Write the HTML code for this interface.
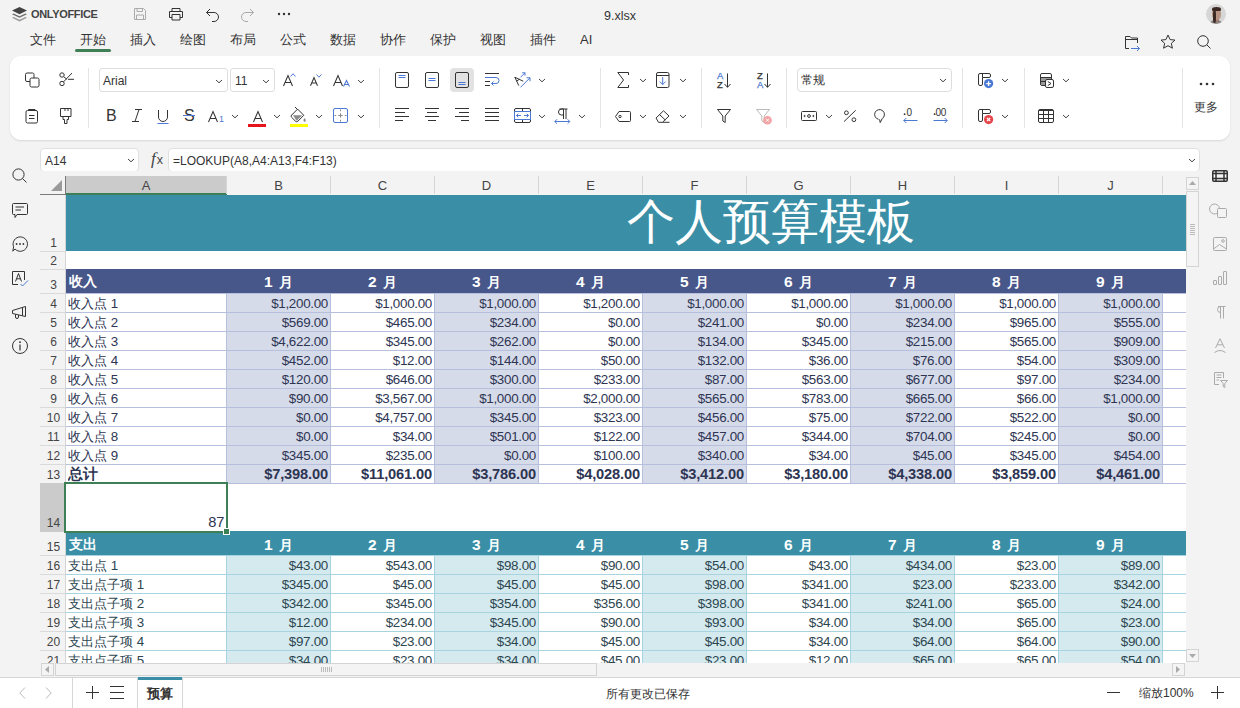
<!DOCTYPE html><html><head><meta charset="utf-8"><style>
html,body{margin:0;padding:0}
body{width:1240px;height:708px;overflow:hidden;position:relative;background:#f3f3f3;font-family:"Liberation Sans",sans-serif;color:#333}
svg{overflow:visible}
.rn{position:absolute;left:40px;width:25px;text-align:center;font-size:11px;color:#444}
.ch{position:absolute;top:172px;height:22px;line-height:22px;text-align:center;font-size:12px;color:#444}
.c{position:absolute;white-space:nowrap;overflow:hidden}
</style></head><body>
<svg style="position:absolute;left:11px;top:6px;" width="17" height="15" viewBox="0 0 17 15" fill="none" stroke="#444444" stroke-width="1"><path d="M8.5 1 L16 4.6 L8.5 8.2 L1 4.6 Z" fill="#444" stroke="none"/><path d="M2.6 7.4 L8.5 10.2 L14.4 7.4 L16 8.2 L8.5 11.8 L1 8.2 Z" fill="#6b6b6b" stroke="none"/><path d="M2.6 11 L8.5 13.8 L14.4 11 L16 11.8 L8.5 15.4 L1 11.8 Z" fill="#9a9a9a" stroke="none"/></svg>
<div style="position:absolute;left:31px;top:6px;white-space:nowrap;font-size:11px;font-weight:bold;color:#444;letter-spacing:-0.33px;line-height:16px">ONLYOFFICE</div>
<svg style="position:absolute;left:133px;top:7px;" width="14" height="14" viewBox="0 0 14 14" fill="none" stroke="#444444" stroke-width="1"><path d="M1.5 1.5 H10.5 L12.5 3.5 V12.5 H1.5 Z" stroke="#aaa"/><path d="M4 1.5 V4.5 H9.5 V1.5" stroke="#aaa"/><path d="M3.5 12.5 V8 H10.5 V12.5" stroke="#aaa"/></svg>
<svg style="position:absolute;left:168px;top:7px;" width="16" height="14" viewBox="0 0 16 14" fill="none" stroke="#444444" stroke-width="1"><path d="M4 4.5 V1.5 H12 V4.5" stroke="#333"/><path d="M4 10.5 H1.5 V4.5 H14.5 V10.5 H12" stroke="#333"/><path d="M4 7.5 H12 V13 H4 Z" stroke="#333"/></svg>
<svg style="position:absolute;left:205px;top:7px;" width="15" height="15" viewBox="0 0 15 15" fill="none" stroke="#444444" stroke-width="1"><path d="M1.5 5.5 H9 A4.5 4.5 0 0 1 9 14.5 H7" stroke="#333"/><path d="M5 2 L1.5 5.5 L5 9" stroke="#333"/></svg>
<svg style="position:absolute;left:240px;top:7px;" width="15" height="15" viewBox="0 0 15 15" fill="none" stroke="#444444" stroke-width="1"><path d="M13.5 5.5 H6 A4.5 4.5 0 0 0 6 14.5 H8" stroke="#aaa"/><path d="M10 2 L13.5 5.5 L10 9" stroke="#aaa"/></svg>
<svg style="position:absolute;left:277px;top:12px;" width="14" height="4" viewBox="0 0 14 4" fill="none" stroke="#444444" stroke-width="1"><circle cx="2" cy="2" r="1.2" fill="#333" stroke="none"/><circle cx="7" cy="2" r="1.2" fill="#333" stroke="none"/><circle cx="12" cy="2" r="1.2" fill="#333" stroke="none"/></svg>
<div style="position:absolute;left:0px;top:8px;white-space:nowrap;width:1240px;text-align:center;font-size:12.5px;color:#333;line-height:16px">9.xlsx</div>
<div style="position:absolute;left:1206px;top:4px;width:20px;height:20px;border-radius:50%;background:#d6d6d6;overflow:hidden"><div style="position:absolute;left:4px;top:16px;width:12px;height:7px;border-radius:45% 45% 0 0;background:#8a8583"></div><div style="position:absolute;left:7px;top:12px;width:6px;height:6px;background:#9a7a6a"></div><div style="position:absolute;left:6px;top:4px;width:9px;height:12px;border-radius:45% 45% 45% 45%;background:#b89484"></div><div style="position:absolute;left:7px;top:6px;width:3px;height:13px;border-radius:40%;background:#3a2822"></div><div style="position:absolute;left:6px;top:3px;width:9px;height:4px;border-radius:50% 50% 20% 20%;background:#3a2822"></div></div>
<div style="position:absolute;left:30px;top:32px;white-space:nowrap;font-size:13px;color:#333;line-height:16px">文件</div>
<div style="position:absolute;left:80px;top:32px;white-space:nowrap;font-size:13px;color:#333;line-height:16px">开始</div>
<div style="position:absolute;left:130px;top:32px;white-space:nowrap;font-size:13px;color:#333;line-height:16px">插入</div>
<div style="position:absolute;left:180px;top:32px;white-space:nowrap;font-size:13px;color:#333;line-height:16px">绘图</div>
<div style="position:absolute;left:230px;top:32px;white-space:nowrap;font-size:13px;color:#333;line-height:16px">布局</div>
<div style="position:absolute;left:280px;top:32px;white-space:nowrap;font-size:13px;color:#333;line-height:16px">公式</div>
<div style="position:absolute;left:330px;top:32px;white-space:nowrap;font-size:13px;color:#333;line-height:16px">数据</div>
<div style="position:absolute;left:380px;top:32px;white-space:nowrap;font-size:13px;color:#333;line-height:16px">协作</div>
<div style="position:absolute;left:430px;top:32px;white-space:nowrap;font-size:13px;color:#333;line-height:16px">保护</div>
<div style="position:absolute;left:480px;top:32px;white-space:nowrap;font-size:13px;color:#333;line-height:16px">视图</div>
<div style="position:absolute;left:530px;top:32px;white-space:nowrap;font-size:13px;color:#333;line-height:16px">插件</div>
<div style="position:absolute;left:580px;top:32px;white-space:nowrap;font-size:13px;color:#333;line-height:16px">AI</div>
<div style="position:absolute;left:75px;top:49px;width:36px;height:3px;background:#3f7f55;border-radius:2px"></div>
<svg style="position:absolute;left:1125px;top:35px;" width="16" height="16" viewBox="0 0 16 16" fill="none" stroke="#444444" stroke-width="1"><path d="M0.5 13.5 V1.5 H5 L6.5 3 H12.5 V8" stroke="#333"/><path d="M0.5 4.5 H12.5" stroke="#333"/><path d="M0.5 13.5 H4" stroke="#333"/><path d="M6 13.5 H14.5 M12 11 L14.5 13.5 L12 16" stroke="#4a78d3"/></svg>
<svg style="position:absolute;left:1160px;top:34px;" width="16" height="15" viewBox="0 0 16 15" fill="none" stroke="#444444" stroke-width="1"><path d="M8 1 L10.1 5.6 L15 6.1 L11.3 9.4 L12.4 14.2 L8 11.7 L3.6 14.2 L4.7 9.4 L1 6.1 L5.9 5.6 Z" stroke="#333" stroke-linejoin="round"/></svg>
<svg style="position:absolute;left:1197px;top:35px;" width="14" height="14" viewBox="0 0 14 14" fill="none" stroke="#444444" stroke-width="1"><circle cx="6" cy="6" r="5.3" stroke="#333"/><path d="M9.8 9.8 L13.5 13.5" stroke="#333"/></svg>
<div style="position:absolute;left:10px;top:56px;width:1220px;height:84px;background:#fff;border-radius:11px;box-shadow:0 1px 2px rgba(0,0,0,0.12)"></div>
<div style="position:absolute;left:88px;top:68px;width:1px;height:60px;background:#e4e4e4"></div>
<div style="position:absolute;left:379px;top:68px;width:1px;height:60px;background:#e4e4e4"></div>
<div style="position:absolute;left:600px;top:68px;width:1px;height:60px;background:#e4e4e4"></div>
<div style="position:absolute;left:701px;top:68px;width:1px;height:60px;background:#e4e4e4"></div>
<div style="position:absolute;left:786px;top:68px;width:1px;height:60px;background:#e4e4e4"></div>
<div style="position:absolute;left:962px;top:68px;width:1px;height:60px;background:#e4e4e4"></div>
<div style="position:absolute;left:1024px;top:68px;width:1px;height:60px;background:#e4e4e4"></div>
<div style="position:absolute;left:1182px;top:68px;width:1px;height:60px;background:#e4e4e4"></div>
<svg style="position:absolute;left:25px;top:72px;" width="15" height="16" viewBox="0 0 15 16" fill="none" stroke="#444444" stroke-width="1"><rect x="0.5" y="1" width="8.5" height="8.5" rx="1.5" stroke="#333"/><rect x="5" y="6" width="9" height="9" rx="1.5" fill="#fff" stroke="#333"/></svg>
<svg style="position:absolute;left:59px;top:72px;" width="16" height="15" viewBox="0 0 16 15" fill="none" stroke="#444444" stroke-width="1"><circle cx="3" cy="3" r="2.2" stroke="#333"/><circle cx="3" cy="11.5" r="2.2" stroke="#333"/><path d="M4.6 9.8 L13 1 M5 5 L8 7.3 M9 7.3 H15" stroke="#333"/></svg>
<svg style="position:absolute;left:25px;top:108px;" width="14" height="16" viewBox="0 0 14 16" fill="none" stroke="#444444" stroke-width="1"><rect x="1" y="2.5" width="11.5" height="12.5" rx="1.5" stroke="#333"/><path d="M3.5 2.5 V1.5 H10 V2.5" stroke="#333"/><path d="M4 7.5 H9.5 M4 10.5 H9.5" stroke="#333"/></svg>
<svg style="position:absolute;left:60px;top:108px;" width="12" height="16" viewBox="0 0 12 16" fill="none" stroke="#444444" stroke-width="1"><path d="M0.5 0.5 H11 V8.5 H0.5 Z" stroke="#333"/><path d="M3 8.5 V11.5 H4.5 V15.5 H7 V11.5 H8.5 V8.5" stroke="#333"/><path d="M5 0.5 V3 M8 0.5 V3" stroke="#333"/></svg>
<div style="position:absolute;left:99px;top:68px;width:129px;height:24px;border:1px solid #dedede;border-radius:3px;background:#fff;box-sizing:border-box"></div>
<div style="position:absolute;left:103px;top:74px;white-space:nowrap;font-size:12px;color:#333;line-height:14px">Arial</div>
<svg style="position:absolute;left:215px;top:78px;" width="8" height="6" viewBox="0 0 8 6" fill="none" stroke="#444444" stroke-width="1"><path d="M1 2 L4 4.8 L7 2" stroke="#444444"/></svg>
<div style="position:absolute;left:230px;top:68px;width:45px;height:24px;border:1px solid #dedede;border-radius:3px;background:#fff;box-sizing:border-box"></div>
<div style="position:absolute;left:235px;top:74px;white-space:nowrap;font-size:12px;color:#333;line-height:14px">11</div>
<svg style="position:absolute;left:262px;top:78px;" width="8" height="6" viewBox="0 0 8 6" fill="none" stroke="#444444" stroke-width="1"><path d="M1 2 L4 4.8 L7 2" stroke="#444444"/></svg>
<svg style="position:absolute;left:283px;top:75px;" width="10" height="12" viewBox="0 0 10 12" fill="none" stroke="#444444" stroke-width="1"><path d="M0.5 11 L5.0 0.5 L9.5 11 M2.3 7.48 H7.7" stroke="#333" stroke-width="1.05"/></svg>
<svg style="position:absolute;left:290px;top:73px;" width="6" height="4" viewBox="0 0 6 4" fill="none" stroke="#444444" stroke-width="1"><path d="M0.5 3.5 L3 0.8 L5.5 3.5" stroke="#4a78d3"/></svg>
<svg style="position:absolute;left:310px;top:76.5px;" width="8" height="9.7" viewBox="0 0 8 9.7" fill="none" stroke="#444444" stroke-width="1"><path d="M0.5 8.7 L4.0 0.5 L7.5 8.7 M1.9000000000000001 5.916 H6.1000000000000005" stroke="#333" stroke-width="1.05"/></svg>
<svg style="position:absolute;left:316px;top:74px;" width="6" height="4" viewBox="0 0 6 4" fill="none" stroke="#444444" stroke-width="1"><path d="M0.5 0.5 L3 3.2 L5.5 0.5" stroke="#4a78d3"/></svg>
<svg style="position:absolute;left:333px;top:75px;" width="10" height="12" viewBox="0 0 10 12" fill="none" stroke="#444444" stroke-width="1"><path d="M0.5 11 L5.0 0.5 L9.5 11 M2.3 7.48 H7.7" stroke="#333" stroke-width="1.05"/></svg>
<svg style="position:absolute;left:343px;top:79.5px;" width="7" height="7.5" viewBox="0 0 7 7.5" fill="none" stroke="#444444" stroke-width="1"><path d="M0.5 6.5 L3.5 0.5 L6.5 6.5 M1.7000000000000002 4.42 H5.300000000000001" stroke="#4a78d3" stroke-width="1.05"/></svg>
<svg style="position:absolute;left:357px;top:78px;" width="8" height="6" viewBox="0 0 8 6" fill="none" stroke="#444444" stroke-width="1"><path d="M1 2 L4 4.8 L7 2" stroke="#444444"/></svg>
<div style="position:absolute;left:106px;top:107px;white-space:nowrap;font-size:16px;color:#333;line-height:18px">B</div>
<svg style="position:absolute;left:131px;top:109px;" width="12" height="13" viewBox="0 0 12 13" fill="none" stroke="#444444" stroke-width="1"><path d="M4 0.5 H11 M1 12.5 H8 M8 0.5 L4 12.5" stroke="#333"/></svg>
<svg style="position:absolute;left:157px;top:109px;" width="12" height="16" viewBox="0 0 12 16" fill="none" stroke="#444444" stroke-width="1"><path d="M1.5 1 V8 A4.5 4.5 0 0 0 10.5 8 V1" stroke="#333"/><path d="M0.5 14.5 H11.5" stroke="#4a78d3"/></svg>
<div style="position:absolute;left:184px;top:107px;white-space:nowrap;font-size:16px;color:#333;line-height:18px">S</div>
<div style="position:absolute;left:183px;top:115px;width:12px;height:1px;background:#4a78d3"></div>
<svg style="position:absolute;left:207.5px;top:110.5px;" width="10" height="12" viewBox="0 0 10 12" fill="none" stroke="#444444" stroke-width="1"><path d="M0.5 11 L5.0 0.5 L9.5 11 M2.3 7.48 H7.7" stroke="#333" stroke-width="1.05"/></svg>
<div style="position:absolute;left:219px;top:114px;white-space:nowrap;font-size:9px;color:#4a78d3;line-height:10px">1</div>
<svg style="position:absolute;left:231px;top:113px;" width="8" height="6" viewBox="0 0 8 6" fill="none" stroke="#444444" stroke-width="1"><path d="M1 2 L4 4.8 L7 2" stroke="#444444"/></svg>
<svg style="position:absolute;left:252.5px;top:110.5px;" width="10" height="12" viewBox="0 0 10 12" fill="none" stroke="#444444" stroke-width="1"><path d="M0.5 11 L5.0 0.5 L9.5 11 M2.3 7.48 H7.7" stroke="#333" stroke-width="1.05"/></svg>
<div style="position:absolute;left:248px;top:124px;width:18px;height:3px;background:#e8141c"></div>
<svg style="position:absolute;left:273px;top:113px;" width="8" height="6" viewBox="0 0 8 6" fill="none" stroke="#444444" stroke-width="1"><path d="M1 2 L4 4.8 L7 2" stroke="#444444"/></svg>
<svg style="position:absolute;left:290px;top:107px;" width="17" height="16" viewBox="0 0 17 16" fill="none" stroke="#444444" stroke-width="1"><path d="M7.6 2.1 L13.8 8.3 L7.9 14.2 Q6.7 15.3 5.5 14.2 L1.6 10.3 Q0.6 9.2 1.6 8.1 Z" stroke="#333" stroke-linejoin="round"/><path d="M5 0 L7.6 2.6" stroke="#333"/><path d="M3 8.3 H12.3 L7.2 13.2 Q6.7 13.6 6.2 13.2 Z" fill="#8a8a8a" stroke="none"/><path d="M14.6 11 Q16.4 13 15.6 14.2 A1.4 1.4 0 0 1 13.6 14.2 Q12.8 13 14.6 11 Z" fill="#8a8a8a" stroke="none"/></svg>
<div style="position:absolute;left:290px;top:124px;width:18px;height:3px;background:#ffff00"></div>
<svg style="position:absolute;left:315px;top:113px;" width="8" height="6" viewBox="0 0 8 6" fill="none" stroke="#444444" stroke-width="1"><path d="M1 2 L4 4.8 L7 2" stroke="#444444"/></svg>
<svg style="position:absolute;left:333px;top:108px;" width="15" height="15" viewBox="0 0 15 15" fill="none" stroke="#444444" stroke-width="1"><rect x="0.5" y="0.5" width="14" height="14" rx="1.5" stroke="#4a78d3"/><path d="M7.5 5.3 V9.7 M5.3 7.5 H9.7 M7.5 1.5 V3.2 M7.5 11.8 V13.5 M1.5 7.5 H3.2 M11.8 7.5 H13.5" stroke="#888"/></svg>
<svg style="position:absolute;left:357px;top:113px;" width="8" height="6" viewBox="0 0 8 6" fill="none" stroke="#444444" stroke-width="1"><path d="M1 2 L4 4.8 L7 2" stroke="#444444"/></svg>
<svg style="position:absolute;left:395px;top:72px;" width="14" height="16" viewBox="0 0 14 16" fill="none" stroke="#444444" stroke-width="1"><rect x="0.5" y="0.5" width="13" height="15" rx="1.5" stroke="#333"/><path d="M3.5 3.5 H10.5" stroke="#4a78d3"/><path d="M3.5 5.5 H10.5" stroke="#4a78d3"/></svg>
<svg style="position:absolute;left:425px;top:72px;" width="14" height="16" viewBox="0 0 14 16" fill="none" stroke="#444444" stroke-width="1"><rect x="0.5" y="0.5" width="13" height="15" rx="1.5" stroke="#333"/><path d="M3.5 6.5 H10.5" stroke="#4a78d3"/><path d="M3.5 8.5 H10.5" stroke="#4a78d3"/></svg>
<div style="position:absolute;left:450px;top:68px;width:24px;height:24px;background:#e2e2e2;border-radius:4px"></div>
<svg style="position:absolute;left:455px;top:72px;" width="14" height="16" viewBox="0 0 14 16" fill="none" stroke="#444444" stroke-width="1"><rect x="0.5" y="0.5" width="13" height="15" rx="1.5" stroke="#333"/><path d="M3.5 10.5 H10.5" stroke="#4a78d3"/><path d="M3.5 12.5 H10.5" stroke="#4a78d3"/></svg>
<svg style="position:absolute;left:485px;top:73px;" width="15" height="14" viewBox="0 0 15 14" fill="none" stroke="#444444" stroke-width="1"><path d="M0 0.5 H14 M0 8.5 H5 M0 12.5 H5" stroke="#333"/><path d="M0 4.5 H11 A3 3 0 0 1 11 10.5 H6.5 M8.5 8.5 L6.5 10.5 L8.5 12.5" stroke="#4a78d3"/></svg>
<svg style="position:absolute;left:514px;top:72px;" width="17" height="16" viewBox="0 0 17 16" fill="none" stroke="#444444" stroke-width="1"><path d="M0.8 5.2 L4.8 13.6 M0.8 5.2 L9.2 9.2 M2.6 9 L5.6 7.2" stroke="#333"/><path d="M6.5 5.3 L11 0.8 M8.2 0.8 H11 V3.6 M6.5 15.3 L16 5.8 M12.5 5.8 H16 V9.3" stroke="#4a78d3"/></svg>
<svg style="position:absolute;left:538px;top:77px;" width="8" height="6" viewBox="0 0 8 6" fill="none" stroke="#444444" stroke-width="1"><path d="M1 2 L4 4.8 L7 2" stroke="#444444"/></svg>
<svg style="position:absolute;left:395px;top:108px;" width="14" height="14" viewBox="0 0 14 14" fill="none" stroke="#444444" stroke-width="1"><path d="M0 0.5 H14" stroke="#333"/><path d="M0 4.5 H10" stroke="#333"/><path d="M0 8.5 H14" stroke="#333"/><path d="M0 12.5 H8" stroke="#333"/></svg>
<svg style="position:absolute;left:425px;top:108px;" width="14" height="14" viewBox="0 0 14 14" fill="none" stroke="#444444" stroke-width="1"><path d="M0 0.5 H14" stroke="#333"/><path d="M2 4.5 H12" stroke="#333"/><path d="M0 8.5 H14" stroke="#333"/><path d="M3 12.5 H11" stroke="#333"/></svg>
<svg style="position:absolute;left:455px;top:108px;" width="14" height="14" viewBox="0 0 14 14" fill="none" stroke="#444444" stroke-width="1"><path d="M0 0.5 H14" stroke="#333"/><path d="M4 4.5 H14" stroke="#333"/><path d="M0 8.5 H14" stroke="#333"/><path d="M6 12.5 H14" stroke="#333"/></svg>
<svg style="position:absolute;left:485px;top:108px;" width="14" height="14" viewBox="0 0 14 14" fill="none" stroke="#444444" stroke-width="1"><path d="M0 0.5 H14" stroke="#333"/><path d="M0 4.5 H14" stroke="#333"/><path d="M0 8.5 H14" stroke="#333"/><path d="M0 12.5 H14" stroke="#333"/></svg>
<svg style="position:absolute;left:514px;top:108px;" width="17" height="15" viewBox="0 0 17 15" fill="none" stroke="#444444" stroke-width="1"><rect x="0.5" y="0.5" width="16" height="14" rx="1.5" stroke="#333"/><path d="M8.5 0.5 V3.5 M8.5 11.5 V14.5" stroke="#333"/><rect x="0.5" y="3.5" width="16" height="8" stroke="#4a78d3"/><path d="M2.5 7.5 H7 M4.3 5.7 L2.5 7.5 L4.3 9.3 M10 7.5 H14.5 M12.7 5.7 L14.5 7.5 L12.7 9.3" stroke="#4a78d3"/></svg>
<svg style="position:absolute;left:538px;top:113px;" width="8" height="6" viewBox="0 0 8 6" fill="none" stroke="#444444" stroke-width="1"><path d="M1 2 L4 4.8 L7 2" stroke="#444444"/></svg>
<svg style="position:absolute;left:554px;top:108px;" width="17" height="16" viewBox="0 0 17 16" fill="none" stroke="#444444" stroke-width="1"><path d="M5.5 1 H13.5 M9.5 1 V11 M12 1 V11 M9.5 1 H7.5 A3 3 0 0 0 7.5 7 H9.5" stroke="#333"/><path d="M0.8 13.5 H15.8 M3 11.3 L0.8 13.5 L3 15.7 M13.6 11.3 L15.8 13.5 L13.6 15.7" stroke="#4a78d3"/></svg>
<svg style="position:absolute;left:578px;top:113px;" width="8" height="6" viewBox="0 0 8 6" fill="none" stroke="#444444" stroke-width="1"><path d="M1 2 L4 4.8 L7 2" stroke="#444444"/></svg>
<svg style="position:absolute;left:617px;top:72px;" width="12" height="16" viewBox="0 0 12 16" fill="none" stroke="#444444" stroke-width="1"><path d="M11.5 3 V0.5 H0.8 L6.5 8 L0.8 15.5 H11.5 V13" stroke="#333" stroke-linejoin="round"/></svg>
<svg style="position:absolute;left:639px;top:77px;" width="8" height="6" viewBox="0 0 8 6" fill="none" stroke="#444444" stroke-width="1"><path d="M1 2 L4 4.8 L7 2" stroke="#444444"/></svg>
<svg style="position:absolute;left:656px;top:72px;" width="13" height="16" viewBox="0 0 13 16" fill="none" stroke="#444444" stroke-width="1"><rect x="0.5" y="0.5" width="12.5" height="15" rx="1.5" stroke="#333"/><path d="M0.5 3.5 H13" stroke="#333"/><path d="M6.7 5 V12.5 M3.8 9.6 L6.7 12.5 L9.6 9.6" stroke="#4a78d3"/></svg>
<svg style="position:absolute;left:679px;top:77px;" width="8" height="6" viewBox="0 0 8 6" fill="none" stroke="#444444" stroke-width="1"><path d="M1 2 L4 4.8 L7 2" stroke="#444444"/></svg>
<svg style="position:absolute;left:615px;top:111px;" width="16" height="11" viewBox="0 0 16 11" fill="none" stroke="#444444" stroke-width="1"><path d="M4 0.5 H14.5 A1 1 0 0 1 15.5 1.5 V9.5 A1 1 0 0 1 14.5 10.5 H4 L0.5 5.5 Z" stroke="#333" stroke-linejoin="round"/><circle cx="5" cy="5.5" r="1.2" stroke="#333"/></svg>
<svg style="position:absolute;left:639px;top:113px;" width="8" height="6" viewBox="0 0 8 6" fill="none" stroke="#444444" stroke-width="1"><path d="M1 2 L4 4.8 L7 2" stroke="#444444"/></svg>
<svg style="position:absolute;left:655px;top:110px;" width="16" height="13" viewBox="0 0 16 13" fill="none" stroke="#444444" stroke-width="1"><path d="M1 8 L8.5 0.8 L14 6 L7.5 12.3 H3.5 Z M4.5 4.5 L10.3 10" stroke="#333" stroke-linejoin="round"/><path d="M7.5 12.3 H14.5" stroke="#333"/></svg>
<svg style="position:absolute;left:679px;top:113px;" width="8" height="6" viewBox="0 0 8 6" fill="none" stroke="#444444" stroke-width="1"><path d="M1 2 L4 4.8 L7 2" stroke="#444444"/></svg>
<div style="position:absolute;left:717px;top:71px;white-space:nowrap;font-size:9.5px;line-height:9px;color:#4a78d3;-webkit-text-stroke:0.25px #4a78d3">A</div>
<div style="position:absolute;left:717px;top:79.5px;white-space:nowrap;font-size:9.5px;line-height:9px;color:#333;-webkit-text-stroke:0.25px #333">Z</div>
<svg style="position:absolute;left:724px;top:73px;" width="7" height="15" viewBox="0 0 7 15" fill="none" stroke="#444444" stroke-width="1"><path d="M3.5 0.5 V14.3 M0.5 11 L3.5 14.3 L6.5 11" stroke="#333"/></svg>
<div style="position:absolute;left:757px;top:71px;white-space:nowrap;font-size:9.5px;line-height:9px;color:#333;-webkit-text-stroke:0.25px #333">Z</div>
<div style="position:absolute;left:757px;top:79.5px;white-space:nowrap;font-size:9.5px;line-height:9px;color:#4a78d3;-webkit-text-stroke:0.25px #4a78d3">A</div>
<svg style="position:absolute;left:764px;top:73px;" width="7" height="15" viewBox="0 0 7 15" fill="none" stroke="#444444" stroke-width="1"><path d="M3.5 0.5 V14.3 M0.5 11 L3.5 14.3 L6.5 11" stroke="#333"/></svg>
<svg style="position:absolute;left:717px;top:109px;" width="14" height="14" viewBox="0 0 14 14" fill="none" stroke="#444444" stroke-width="1"><path d="M0.5 0.5 H13.5 L8.2 7 V13.5 L5.8 12 V7 Z" stroke="#333" stroke-linejoin="round"/></svg>
<svg style="position:absolute;left:756px;top:109px;" width="17" height="16" viewBox="0 0 17 16" fill="none" stroke="#444444" stroke-width="1"><path d="M0.5 0.5 H13.5 L8.2 7 V13.5 L5.8 12 V7 Z" stroke="#bbb" stroke-linejoin="round"/><circle cx="11.5" cy="11.2" r="4.3" fill="#f3a3a3" stroke="none"/><path d="M10 9.7 L13 12.7 M13 9.7 L10 12.7" stroke="#fff"/></svg>
<div style="position:absolute;left:797px;top:68px;width:155px;height:24px;border:1px solid #dedede;border-radius:4px;background:#fff;box-sizing:border-box"></div>
<div style="position:absolute;left:801px;top:73px;white-space:nowrap;font-size:12px;color:#333;line-height:14px">常规</div>
<svg style="position:absolute;left:939px;top:77px;" width="8" height="6" viewBox="0 0 8 6" fill="none" stroke="#444444" stroke-width="1"><path d="M1 2 L4 4.8 L7 2" stroke="#444444"/></svg>
<svg style="position:absolute;left:801px;top:111px;" width="16" height="10" viewBox="0 0 16 10" fill="none" stroke="#444444" stroke-width="1"><rect x="0.5" y="0.5" width="15" height="9" rx="1" stroke="#333"/><circle cx="8" cy="5" r="1.4" stroke="#333"/><circle cx="3.6" cy="5" r="0.6" fill="#333"/><circle cx="12.4" cy="5" r="0.6" fill="#333"/></svg>
<svg style="position:absolute;left:825px;top:113px;" width="8" height="6" viewBox="0 0 8 6" fill="none" stroke="#444444" stroke-width="1"><path d="M1 2 L4 4.8 L7 2" stroke="#444444"/></svg>
<svg style="position:absolute;left:844px;top:110px;" width="13" height="13" viewBox="0 0 13 13" fill="none" stroke="#444444" stroke-width="1"><circle cx="2.4" cy="2.8" r="1.9" stroke="#333"/><circle cx="9.9" cy="9.7" r="1.9" stroke="#333"/><path d="M11.7 0.3 L0 11.6" stroke="#333"/></svg>
<svg style="position:absolute;left:874px;top:109px;" width="12" height="15" viewBox="0 0 12 15" fill="none" stroke="#444444" stroke-width="1"><path d="M4.6 10.3 A4.9 4.9 0 1 1 8.2 9.6 L6.2 13.6 L5.6 10.4" stroke="#333" stroke-linejoin="round"/></svg>
<div style="position:absolute;left:906.5px;top:107.5px;white-space:nowrap;font-size:10px;color:#333;line-height:10px">0</div>
<svg style="position:absolute;left:903px;top:108px;" width="15" height="16" viewBox="0 0 15 16" fill="none" stroke="#444444" stroke-width="1"><circle cx="1.6" cy="6.2" r="0.9" fill="#333" stroke="none"/><path d="M0.8 12.5 H14.5 M3.3 10 L0.8 12.5 L3.3 15" stroke="#4a78d3"/></svg>
<div style="position:absolute;left:935.5px;top:107.5px;white-space:nowrap;font-size:10px;color:#333;line-height:10px;letter-spacing:-0.4px">00</div>
<svg style="position:absolute;left:933px;top:108px;" width="15" height="16" viewBox="0 0 15 16" fill="none" stroke="#444444" stroke-width="1"><circle cx="1.6" cy="6.2" r="0.9" fill="#333" stroke="none"/><path d="M0.5 12.5 H14.2 M11.7 10 L14.2 12.5 L11.7 15" stroke="#4a78d3"/></svg>
<svg style="position:absolute;left:977px;top:72px;" width="17" height="17" viewBox="0 0 17 17" fill="none" stroke="#444444" stroke-width="1"><path d="M3 1.5 H12 A1.5 1.5 0 0 1 13.5 3 V4 A1.5 1.5 0 0 1 12 5.5 H5.5 V12 A1.5 1.5 0 0 1 4 13.5 H3 A1.5 1.5 0 0 1 1.5 12 V3 A1.5 1.5 0 0 1 3 1.5 Z M5.5 1.5 V5.5" stroke="#333"/><circle cx="11.6" cy="11.6" r="4.6" fill="#4a78d3" stroke="none"/><path d="M11.6 9.2 V14 M9.2 11.6 H14" stroke="#fff" stroke-width="1.3"/></svg>
<svg style="position:absolute;left:1001px;top:77px;" width="8" height="6" viewBox="0 0 8 6" fill="none" stroke="#444444" stroke-width="1"><path d="M1 2 L4 4.8 L7 2" stroke="#444444"/></svg>
<svg style="position:absolute;left:977px;top:108px;" width="17" height="17" viewBox="0 0 17 17" fill="none" stroke="#444444" stroke-width="1"><path d="M3 1.5 H12 A1.5 1.5 0 0 1 13.5 3 V4 A1.5 1.5 0 0 1 12 5.5 H5.5 V12 A1.5 1.5 0 0 1 4 13.5 H3 A1.5 1.5 0 0 1 1.5 12 V3 A1.5 1.5 0 0 1 3 1.5 Z M5.5 1.5 V5.5" stroke="#333"/><circle cx="11.6" cy="11.6" r="4.6" fill="#e5464b" stroke="none"/><path d="M10 10 L13.2 13.2 M13.2 10 L10 13.2" stroke="#fff" stroke-width="1.2"/></svg>
<svg style="position:absolute;left:1001px;top:113px;" width="8" height="6" viewBox="0 0 8 6" fill="none" stroke="#444444" stroke-width="1"><path d="M1 2 L4 4.8 L7 2" stroke="#444444"/></svg>
<svg style="position:absolute;left:1039px;top:72px;" width="16" height="17" viewBox="0 0 16 17" fill="none" stroke="#444444" stroke-width="1"><rect x="1.5" y="1.5" width="11" height="12" rx="1.5" stroke="#333"/><path d="M1.5 5.5 H12.5 V9.5 H1.5 Z" fill="#999" stroke="#333"/><path d="M2 10 H6 V13 H2 Z" fill="#999" stroke="none"/><rect x="6.5" y="7.5" width="8" height="8" rx="1.5" fill="#fff" stroke="#333"/><path d="M8.8 9.5 L12 11.5 L8.8 13.5" stroke="#333"/></svg>
<svg style="position:absolute;left:1062px;top:77px;" width="8" height="6" viewBox="0 0 8 6" fill="none" stroke="#444444" stroke-width="1"><path d="M1 2 L4 4.8 L7 2" stroke="#444444"/></svg>
<svg style="position:absolute;left:1038px;top:109px;" width="16" height="14" viewBox="0 0 16 14" fill="none" stroke="#444444" stroke-width="1"><rect x="0.5" y="0.5" width="15" height="13" rx="1.5" stroke="#333"/><path d="M1 1.5 H15" stroke="#333"/><path d="M0.5 5.5 H15.5 M0.5 9.5 H15.5 M5.5 0.5 V13.5 M10.5 0.5 V13.5" stroke="#333"/></svg>
<svg style="position:absolute;left:1062px;top:113px;" width="8" height="6" viewBox="0 0 8 6" fill="none" stroke="#444444" stroke-width="1"><path d="M1 2 L4 4.8 L7 2" stroke="#444444"/></svg>
<svg style="position:absolute;left:1199px;top:82px;" width="16" height="4" viewBox="0 0 16 4" fill="none" stroke="#444444" stroke-width="1"><circle cx="2" cy="2" r="1.3" fill="#333" stroke="none"/><circle cx="8" cy="2" r="1.3" fill="#333" stroke="none"/><circle cx="14" cy="2" r="1.3" fill="#333" stroke="none"/></svg>
<div style="position:absolute;left:1194px;top:99px;white-space:nowrap;font-size:12px;color:#333;line-height:16px">更多</div>
<svg style="position:absolute;left:12px;top:168px;" width="16" height="16" viewBox="0 0 16 16" fill="none" stroke="#444444" stroke-width="1"><circle cx="6.5" cy="6.5" r="5.6" stroke="#333"/><path d="M10.5 10.5 L14.5 14.5" stroke="#333"/></svg>
<svg style="position:absolute;left:12px;top:203px;" width="16" height="16" viewBox="0 0 16 16" fill="none" stroke="#444444" stroke-width="1"><path d="M1.5 0.5 H14.5 A1 1 0 0 1 15.5 1.5 V10.5 A1 1 0 0 1 14.5 11.5 H5 L3 14.5 V11.5 H1.5 A1 1 0 0 1 0.5 10.5 V1.5 A1 1 0 0 1 1.5 0.5 Z" stroke="#333" stroke-linejoin="round"/><path d="M3.5 4 H12 M3.5 7 H9" stroke="#333"/></svg>
<svg style="position:absolute;left:12px;top:236px;" width="16" height="16" viewBox="0 0 16 16" fill="none" stroke="#444444" stroke-width="1"><path d="M3 13 A7.2 7.2 0 1 0 1.6 10.8 L0.8 15.2 Z" stroke="#333" stroke-linejoin="round"/><circle cx="4.6" cy="8" r="0.9" fill="#333" stroke="none"/><circle cx="8" cy="8" r="0.9" fill="#333" stroke="none"/><circle cx="11.4" cy="8" r="0.9" fill="#333" stroke="none"/></svg>
<svg style="position:absolute;left:12px;top:271px;" width="17" height="16" viewBox="0 0 17 16" fill="none" stroke="#444444" stroke-width="1"><path d="M12.5 9 V0.5 H0.5 V13.5 H6" stroke="#333"/><path d="M3.5 10.5 L6.5 2.5 L9.5 10.5 M4.6 7.8 H8.4" stroke="#333"/><path d="M8.5 13 L10.5 15 L16 9.5" stroke="#4a78d3"/></svg>
<svg style="position:absolute;left:12px;top:306px;" width="15" height="13" viewBox="0 0 15 13" fill="none" stroke="#444444" stroke-width="1"><path d="M0.5 4.5 L13.5 0.5 V10.5 L0.5 7.5 Z M10.5 1.5 V9.7" stroke="#333" stroke-linejoin="round"/><path d="M3.5 8.3 V11 A1.5 1.5 0 0 0 6.5 11 V9" stroke="#333"/></svg>
<svg style="position:absolute;left:12px;top:338px;" width="16" height="16" viewBox="0 0 16 16" fill="none" stroke="#444444" stroke-width="1"><circle cx="8" cy="8" r="7.5" stroke="#333"/><path d="M8 6.5 V12.5" stroke="#333" stroke-width="1.2"/><circle cx="8" cy="4.2" r="0.9" fill="#333" stroke="none"/></svg>
<svg style="position:absolute;left:1212px;top:170px;" width="16" height="12" viewBox="0 0 16 12" fill="none" stroke="#444444" stroke-width="1"><rect x="0.75" y="0.75" width="14.5" height="10.5" rx="1.2" stroke="#333" stroke-width="1.5"/><path d="M0.75 3.5 H15.25 M0.75 8.5 H15.25 M4 0.75 V11.25 M12 0.75 V11.25" stroke="#333" stroke-width="1.5"/></svg>
<svg style="position:absolute;left:1212px;top:203px;" width="15" height="15" viewBox="0 0 15 15" fill="none" stroke="#444444" stroke-width="1"><path d="M7.5 5.5 A5 5 0 1 0 5.5 10" stroke="#aaa"/><rect x="5.5" y="5.5" width="9" height="9" rx="1" stroke="#aaa"/></svg>
<svg style="position:absolute;left:1213px;top:237px;" width="14" height="14" viewBox="0 0 14 14" fill="none" stroke="#444444" stroke-width="1"><rect x="0.5" y="0.5" width="13" height="13" rx="1" stroke="#aaa"/><path d="M0.5 12 L6.5 7.5 L13.5 12" stroke="#aaa"/><circle cx="10" cy="4" r="1.3" stroke="#aaa"/></svg>
<svg style="position:absolute;left:1213px;top:271px;" width="14" height="14" viewBox="0 0 14 14" fill="none" stroke="#444444" stroke-width="1"><rect x="0.5" y="9.5" width="3" height="4" rx="0.5" stroke="#aaa"/><rect x="5.5" y="5.5" width="3" height="8" rx="0.5" stroke="#aaa"/><rect x="10.5" y="0.5" width="3" height="13" rx="0.5" stroke="#aaa"/></svg>
<svg style="position:absolute;left:1214px;top:306px;" width="12" height="13" viewBox="0 0 12 13" fill="none" stroke="#444444" stroke-width="1"><path d="M4 0.5 H11.5 M6.5 0.5 V12.5 M9.5 0.5 V12.5 M6.5 0.5 A3 3 0 0 0 6.5 6.5" stroke="#aaa"/></svg>
<svg style="position:absolute;left:1214px;top:338px;" width="12" height="15" viewBox="0 0 12 15" fill="none" stroke="#444444" stroke-width="1"><path d="M1.5 10 L6 0.8 L10.5 10 M3.2 6.8 H8.8" stroke="#aaa"/><path d="M0.5 14.5 Q6 10.5 11.5 14.5" stroke="#aaa"/></svg>
<svg style="position:absolute;left:1214px;top:372px;" width="14" height="16" viewBox="0 0 14 16" fill="none" stroke="#444444" stroke-width="1"><path d="M9.5 6 V0.5 H0.5 V12.5 H5" stroke="#aaa"/><path d="M2.5 3 H7.5 M2.5 5.5 H7.5 M2.5 8 H5" stroke="#aaa"/><path d="M6.5 8.5 H13.5 L10.8 11.5 V15.5 L9.2 14.5 V11.5 Z" stroke="#aaa" stroke-linejoin="round"/></svg>
<div style="position:absolute;left:40px;top:148px;width:99px;height:24px;background:#fff;border:1px solid #e0e0e0;border-radius:4px;box-sizing:border-box"></div>
<div style="position:absolute;left:45px;top:154px;white-space:nowrap;font-size:12px;color:#333;line-height:14px">A14</div>
<svg style="position:absolute;left:127px;top:157px;" width="8" height="6" viewBox="0 0 8 6" fill="none" stroke="#444444" stroke-width="1"><path d="M1 2 L4 4.8 L7 2" stroke="#444444"/></svg>
<div style="position:absolute;left:151px;top:150px;white-space:nowrap;color:#444;line-height:18px"><i style="font-family:'Liberation Serif',serif;font-size:17px;font-weight:normal">f</i><span style="font-size:12.5px;margin-left:1px">x</span></div>
<div style="position:absolute;left:168px;top:148px;width:1032px;height:24px;background:#fff;border:1px solid #e0e0e0;border-radius:4px;box-sizing:border-box"></div>
<div style="position:absolute;left:173px;top:154px;white-space:nowrap;font-size:12px;color:#333;line-height:14px">=LOOKUP(A8,A4:A13,F4:F13)</div>
<svg style="position:absolute;left:1188px;top:157px;" width="8" height="6" viewBox="0 0 8 6" fill="none" stroke="#444444" stroke-width="1"><path d="M1 2 L4 4.8 L7 2" stroke="#444444"/></svg>
<div style="position:absolute;left:40px;top:171px;width:1146px;height:492px;overflow:hidden;background:#fff">
<div style="position:absolute;left:0px;top:0px;width:1146px;height:24px;background:#f3f3f3"></div>
<div style="position:absolute;left:0px;top:24px;width:25px;height:468px;background:#f3f3f3"></div>
<div style="position:absolute;left:26px;top:5px;width:161px;height:17px;background:#cbcbcb"></div>
<div style="position:absolute;left:26px;top:22px;width:161px;height:2px;background:#3f7f55"></div>
<div style="position:absolute;left:0px;top:312px;width:24px;height:49px;background:#cbcbcb"></div>
<div style="position:absolute;left:25px;top:24px;width:1px;height:468px;background:#d4d4d4"></div>
<div style="position:absolute;left:186px;top:5px;width:1px;height:18px;background:#d6d6d6"></div>
<div style="position:absolute;left:290px;top:5px;width:1px;height:18px;background:#d6d6d6"></div>
<div style="position:absolute;left:394px;top:5px;width:1px;height:18px;background:#d6d6d6"></div>
<div style="position:absolute;left:498px;top:5px;width:1px;height:18px;background:#d6d6d6"></div>
<div style="position:absolute;left:602px;top:5px;width:1px;height:18px;background:#d6d6d6"></div>
<div style="position:absolute;left:706px;top:5px;width:1px;height:18px;background:#d6d6d6"></div>
<div style="position:absolute;left:810px;top:5px;width:1px;height:18px;background:#d6d6d6"></div>
<div style="position:absolute;left:914px;top:5px;width:1px;height:18px;background:#d6d6d6"></div>
<div style="position:absolute;left:1018px;top:5px;width:1px;height:18px;background:#d6d6d6"></div>
<div style="position:absolute;left:1122px;top:5px;width:1px;height:18px;background:#d6d6d6"></div>
<div style="position:absolute;left:1226px;top:5px;width:1px;height:18px;background:#d6d6d6"></div>
<div style="position:absolute;left:0px;top:23px;width:26px;height:1px;background:#7a7a7a"></div>
<div style="position:absolute;left:25px;top:5px;width:1px;height:19px;background:#7a7a7a"></div>
<svg style="position:absolute;left:11px;top:9px" width="11" height="11" viewBox="0 0 11 11"><path d="M11 0 V11 H0 Z" fill="#9a9a9a"/></svg>
<div class="c" style="left:26px;top:4.50px;width:160px;height:20px;line-height:20px;font-size:13px;text-align:center;color:#444">A</div>
<div class="c" style="left:187px;top:4.50px;width:103px;height:20px;line-height:20px;font-size:13px;text-align:center;color:#444">B</div>
<div class="c" style="left:291px;top:4.50px;width:103px;height:20px;line-height:20px;font-size:13px;text-align:center;color:#444">C</div>
<div class="c" style="left:395px;top:4.50px;width:103px;height:20px;line-height:20px;font-size:13px;text-align:center;color:#444">D</div>
<div class="c" style="left:499px;top:4.50px;width:103px;height:20px;line-height:20px;font-size:13px;text-align:center;color:#444">E</div>
<div class="c" style="left:603px;top:4.50px;width:103px;height:20px;line-height:20px;font-size:13px;text-align:center;color:#444">F</div>
<div class="c" style="left:707px;top:4.50px;width:103px;height:20px;line-height:20px;font-size:13px;text-align:center;color:#444">G</div>
<div class="c" style="left:811px;top:4.50px;width:103px;height:20px;line-height:20px;font-size:13px;text-align:center;color:#444">H</div>
<div class="c" style="left:915px;top:4.50px;width:103px;height:20px;line-height:20px;font-size:13px;text-align:center;color:#444">I</div>
<div class="c" style="left:1019px;top:4.50px;width:103px;height:20px;line-height:20px;font-size:13px;text-align:center;color:#444">J</div>
<div class="c" style="left:1123px;top:4.50px;width:103px;height:20px;line-height:20px;font-size:13px;text-align:center;color:#444">K</div>
<div class="c" style="left:1px;top:61.84px;width:25px;height:20px;line-height:20px;font-size:12px;text-align:center;color:#444">1</div>
<div style="position:absolute;left:0px;top:80px;width:25px;height:1px;background:#dadada"></div>
<div class="c" style="left:1px;top:79.84px;width:25px;height:20px;line-height:20px;font-size:12px;text-align:center;color:#444">2</div>
<div style="position:absolute;left:0px;top:98px;width:25px;height:1px;background:#dadada"></div>
<div class="c" style="left:1px;top:103.84px;width:25px;height:20px;line-height:20px;font-size:12px;text-align:center;color:#444">3</div>
<div style="position:absolute;left:0px;top:122px;width:25px;height:1px;background:#dadada"></div>
<div class="c" style="left:1px;top:122.84px;width:25px;height:20px;line-height:20px;font-size:12px;text-align:center;color:#444">4</div>
<div style="position:absolute;left:0px;top:141px;width:25px;height:1px;background:#dadada"></div>
<div class="c" style="left:1px;top:141.84px;width:25px;height:20px;line-height:20px;font-size:12px;text-align:center;color:#444">5</div>
<div style="position:absolute;left:0px;top:160px;width:25px;height:1px;background:#dadada"></div>
<div class="c" style="left:1px;top:160.84px;width:25px;height:20px;line-height:20px;font-size:12px;text-align:center;color:#444">6</div>
<div style="position:absolute;left:0px;top:179px;width:25px;height:1px;background:#dadada"></div>
<div class="c" style="left:1px;top:179.84px;width:25px;height:20px;line-height:20px;font-size:12px;text-align:center;color:#444">7</div>
<div style="position:absolute;left:0px;top:198px;width:25px;height:1px;background:#dadada"></div>
<div class="c" style="left:1px;top:198.84px;width:25px;height:20px;line-height:20px;font-size:12px;text-align:center;color:#444">8</div>
<div style="position:absolute;left:0px;top:217px;width:25px;height:1px;background:#dadada"></div>
<div class="c" style="left:1px;top:217.84px;width:25px;height:20px;line-height:20px;font-size:12px;text-align:center;color:#444">9</div>
<div style="position:absolute;left:0px;top:236px;width:25px;height:1px;background:#dadada"></div>
<div class="c" style="left:1px;top:236.84px;width:25px;height:20px;line-height:20px;font-size:12px;text-align:center;color:#444">10</div>
<div style="position:absolute;left:0px;top:255px;width:25px;height:1px;background:#dadada"></div>
<div class="c" style="left:1px;top:255.84px;width:25px;height:20px;line-height:20px;font-size:12px;text-align:center;color:#444">11</div>
<div style="position:absolute;left:0px;top:274px;width:25px;height:1px;background:#dadada"></div>
<div class="c" style="left:1px;top:274.84px;width:25px;height:20px;line-height:20px;font-size:12px;text-align:center;color:#444">12</div>
<div style="position:absolute;left:0px;top:293px;width:25px;height:1px;background:#dadada"></div>
<div class="c" style="left:1px;top:293.84px;width:25px;height:20px;line-height:20px;font-size:12px;text-align:center;color:#444">13</div>
<div class="c" style="left:1px;top:341.84px;width:25px;height:20px;line-height:20px;font-size:12px;text-align:center;color:#444">14</div>
<div class="c" style="left:1px;top:365.84px;width:25px;height:20px;line-height:20px;font-size:12px;text-align:center;color:#444">15</div>
<div style="position:absolute;left:0px;top:384px;width:25px;height:1px;background:#dadada"></div>
<div class="c" style="left:1px;top:384.84px;width:25px;height:20px;line-height:20px;font-size:12px;text-align:center;color:#444">16</div>
<div style="position:absolute;left:0px;top:403px;width:25px;height:1px;background:#dadada"></div>
<div class="c" style="left:1px;top:403.84px;width:25px;height:20px;line-height:20px;font-size:12px;text-align:center;color:#444">17</div>
<div style="position:absolute;left:0px;top:422px;width:25px;height:1px;background:#dadada"></div>
<div class="c" style="left:1px;top:422.84px;width:25px;height:20px;line-height:20px;font-size:12px;text-align:center;color:#444">18</div>
<div style="position:absolute;left:0px;top:441px;width:25px;height:1px;background:#dadada"></div>
<div class="c" style="left:1px;top:441.84px;width:25px;height:20px;line-height:20px;font-size:12px;text-align:center;color:#444">19</div>
<div style="position:absolute;left:0px;top:460px;width:25px;height:1px;background:#dadada"></div>
<div class="c" style="left:1px;top:460.84px;width:25px;height:20px;line-height:20px;font-size:12px;text-align:center;color:#444">20</div>
<div style="position:absolute;left:0px;top:479px;width:25px;height:1px;background:#dadada"></div>
<div class="c" style="left:1px;top:479.84px;width:25px;height:20px;line-height:20px;font-size:12px;text-align:center;color:#444">21</div>
<div style="position:absolute;left:0px;top:498px;width:25px;height:1px;background:#dadada"></div>
<div style="position:absolute;left:26px;top:24px;width:1120px;height:56px;background:#3a8fa6"></div>
<div class="c" style="left:571px;top:23px;width:320px;height:56px;font-family:'Liberation Serif',serif;font-size:48px;line-height:56px;color:#fff;text-align:center;overflow:visible">个人预算模板</div>
<div style="position:absolute;left:26px;top:98px;width:1120px;height:24px;background:#47578a"></div>
<div class="c" style="left:29px;top:99.85px;width:150px;height:20px;line-height:20px;font-size:14.3px;font-weight:bold;color:#fff">收入</div>
<div style="position:absolute;left:187px;top:123px;width:103px;height:189px;background:#d6dbea"></div>
<div style="position:absolute;left:395px;top:123px;width:103px;height:189px;background:#d6dbea"></div>
<div style="position:absolute;left:603px;top:123px;width:103px;height:189px;background:#d6dbea"></div>
<div style="position:absolute;left:811px;top:123px;width:103px;height:189px;background:#d6dbea"></div>
<div style="position:absolute;left:1019px;top:123px;width:103px;height:189px;background:#d6dbea"></div>
<div style="position:absolute;left:26px;top:122px;width:1120px;height:1px;background:#b6bfdd"></div>
<div style="position:absolute;left:26px;top:141px;width:1120px;height:1px;background:#b6bfdd"></div>
<div style="position:absolute;left:26px;top:160px;width:1120px;height:1px;background:#b6bfdd"></div>
<div style="position:absolute;left:26px;top:179px;width:1120px;height:1px;background:#b6bfdd"></div>
<div style="position:absolute;left:26px;top:198px;width:1120px;height:1px;background:#b6bfdd"></div>
<div style="position:absolute;left:26px;top:217px;width:1120px;height:1px;background:#b6bfdd"></div>
<div style="position:absolute;left:26px;top:236px;width:1120px;height:1px;background:#b6bfdd"></div>
<div style="position:absolute;left:26px;top:255px;width:1120px;height:1px;background:#b6bfdd"></div>
<div style="position:absolute;left:26px;top:274px;width:1120px;height:1px;background:#b6bfdd"></div>
<div style="position:absolute;left:26px;top:293px;width:1120px;height:1px;background:#b6bfdd"></div>
<div style="position:absolute;left:26px;top:312px;width:1120px;height:1px;background:#b6bfdd"></div>
<div style="position:absolute;left:186px;top:122px;width:1px;height:191px;background:#b6bfdd"></div>
<div style="position:absolute;left:290px;top:122px;width:1px;height:191px;background:#b6bfdd"></div>
<div style="position:absolute;left:394px;top:122px;width:1px;height:191px;background:#b6bfdd"></div>
<div style="position:absolute;left:498px;top:122px;width:1px;height:191px;background:#b6bfdd"></div>
<div style="position:absolute;left:602px;top:122px;width:1px;height:191px;background:#b6bfdd"></div>
<div style="position:absolute;left:706px;top:122px;width:1px;height:191px;background:#b6bfdd"></div>
<div style="position:absolute;left:810px;top:122px;width:1px;height:191px;background:#b6bfdd"></div>
<div style="position:absolute;left:914px;top:122px;width:1px;height:191px;background:#b6bfdd"></div>
<div style="position:absolute;left:1018px;top:122px;width:1px;height:191px;background:#b6bfdd"></div>
<div style="position:absolute;left:1122px;top:122px;width:1px;height:191px;background:#b6bfdd"></div>
<div class="c" style="left:187px;top:101.46px;width:103px;height:20px;line-height:20px;font-size:16px;text-align:center;font-weight:bold;color:#fff"><span style="font-size:15.5px">1</span><span style="display:inline-block;width:6.5px"></span><span style="font-size:14px">月</span></div>
<div class="c" style="left:291px;top:101.46px;width:103px;height:20px;line-height:20px;font-size:16px;text-align:center;font-weight:bold;color:#fff"><span style="font-size:15.5px">2</span><span style="display:inline-block;width:6.5px"></span><span style="font-size:14px">月</span></div>
<div class="c" style="left:395px;top:101.46px;width:103px;height:20px;line-height:20px;font-size:16px;text-align:center;font-weight:bold;color:#fff"><span style="font-size:15.5px">3</span><span style="display:inline-block;width:6.5px"></span><span style="font-size:14px">月</span></div>
<div class="c" style="left:499px;top:101.46px;width:103px;height:20px;line-height:20px;font-size:16px;text-align:center;font-weight:bold;color:#fff"><span style="font-size:15.5px">4</span><span style="display:inline-block;width:6.5px"></span><span style="font-size:14px">月</span></div>
<div class="c" style="left:603px;top:101.46px;width:103px;height:20px;line-height:20px;font-size:16px;text-align:center;font-weight:bold;color:#fff"><span style="font-size:15.5px">5</span><span style="display:inline-block;width:6.5px"></span><span style="font-size:14px">月</span></div>
<div class="c" style="left:707px;top:101.46px;width:103px;height:20px;line-height:20px;font-size:16px;text-align:center;font-weight:bold;color:#fff"><span style="font-size:15.5px">6</span><span style="display:inline-block;width:6.5px"></span><span style="font-size:14px">月</span></div>
<div class="c" style="left:811px;top:101.46px;width:103px;height:20px;line-height:20px;font-size:16px;text-align:center;font-weight:bold;color:#fff"><span style="font-size:15.5px">7</span><span style="display:inline-block;width:6.5px"></span><span style="font-size:14px">月</span></div>
<div class="c" style="left:915px;top:101.46px;width:103px;height:20px;line-height:20px;font-size:16px;text-align:center;font-weight:bold;color:#fff"><span style="font-size:15.5px">8</span><span style="display:inline-block;width:6.5px"></span><span style="font-size:14px">月</span></div>
<div class="c" style="left:1019px;top:101.46px;width:103px;height:20px;line-height:20px;font-size:16px;text-align:center;font-weight:bold;color:#fff"><span style="font-size:15.5px">9</span><span style="display:inline-block;width:6.5px"></span><span style="font-size:14px">月</span></div>
<div class="c" style="left:28px;top:122.88px;width:156px;height:20px;line-height:20px;font-size:13.33px;color:#2e3553">收入点 1</div>
<div class="c" style="left:187px;top:122.96px;width:101px;height:20px;line-height:20px;font-size:13.4px;color:#2e3553;text-align:right;letter-spacing:-0.3px">$1,200.00</div>
<div class="c" style="left:291px;top:122.96px;width:101px;height:20px;line-height:20px;font-size:13.4px;color:#2e3553;text-align:right;letter-spacing:-0.3px">$1,000.00</div>
<div class="c" style="left:395px;top:122.96px;width:101px;height:20px;line-height:20px;font-size:13.4px;color:#2e3553;text-align:right;letter-spacing:-0.3px">$1,000.00</div>
<div class="c" style="left:499px;top:122.96px;width:101px;height:20px;line-height:20px;font-size:13.4px;color:#2e3553;text-align:right;letter-spacing:-0.3px">$1,200.00</div>
<div class="c" style="left:603px;top:122.96px;width:101px;height:20px;line-height:20px;font-size:13.4px;color:#2e3553;text-align:right;letter-spacing:-0.3px">$1,000.00</div>
<div class="c" style="left:707px;top:122.96px;width:101px;height:20px;line-height:20px;font-size:13.4px;color:#2e3553;text-align:right;letter-spacing:-0.3px">$1,000.00</div>
<div class="c" style="left:811px;top:122.96px;width:101px;height:20px;line-height:20px;font-size:13.4px;color:#2e3553;text-align:right;letter-spacing:-0.3px">$1,000.00</div>
<div class="c" style="left:915px;top:122.96px;width:101px;height:20px;line-height:20px;font-size:13.4px;color:#2e3553;text-align:right;letter-spacing:-0.3px">$1,000.00</div>
<div class="c" style="left:1019px;top:122.96px;width:101px;height:20px;line-height:20px;font-size:13.4px;color:#2e3553;text-align:right;letter-spacing:-0.3px">$1,000.00</div>
<div class="c" style="left:28px;top:141.88px;width:156px;height:20px;line-height:20px;font-size:13.33px;color:#2e3553">收入点 2</div>
<div class="c" style="left:187px;top:141.96px;width:101px;height:20px;line-height:20px;font-size:13.4px;color:#2e3553;text-align:right;letter-spacing:-0.3px">$569.00</div>
<div class="c" style="left:291px;top:141.96px;width:101px;height:20px;line-height:20px;font-size:13.4px;color:#2e3553;text-align:right;letter-spacing:-0.3px">$465.00</div>
<div class="c" style="left:395px;top:141.96px;width:101px;height:20px;line-height:20px;font-size:13.4px;color:#2e3553;text-align:right;letter-spacing:-0.3px">$234.00</div>
<div class="c" style="left:499px;top:141.96px;width:101px;height:20px;line-height:20px;font-size:13.4px;color:#2e3553;text-align:right;letter-spacing:-0.3px">$0.00</div>
<div class="c" style="left:603px;top:141.96px;width:101px;height:20px;line-height:20px;font-size:13.4px;color:#2e3553;text-align:right;letter-spacing:-0.3px">$241.00</div>
<div class="c" style="left:707px;top:141.96px;width:101px;height:20px;line-height:20px;font-size:13.4px;color:#2e3553;text-align:right;letter-spacing:-0.3px">$0.00</div>
<div class="c" style="left:811px;top:141.96px;width:101px;height:20px;line-height:20px;font-size:13.4px;color:#2e3553;text-align:right;letter-spacing:-0.3px">$234.00</div>
<div class="c" style="left:915px;top:141.96px;width:101px;height:20px;line-height:20px;font-size:13.4px;color:#2e3553;text-align:right;letter-spacing:-0.3px">$965.00</div>
<div class="c" style="left:1019px;top:141.96px;width:101px;height:20px;line-height:20px;font-size:13.4px;color:#2e3553;text-align:right;letter-spacing:-0.3px">$555.00</div>
<div class="c" style="left:28px;top:160.88px;width:156px;height:20px;line-height:20px;font-size:13.33px;color:#2e3553">收入点 3</div>
<div class="c" style="left:187px;top:160.96px;width:101px;height:20px;line-height:20px;font-size:13.4px;color:#2e3553;text-align:right;letter-spacing:-0.3px">$4,622.00</div>
<div class="c" style="left:291px;top:160.96px;width:101px;height:20px;line-height:20px;font-size:13.4px;color:#2e3553;text-align:right;letter-spacing:-0.3px">$345.00</div>
<div class="c" style="left:395px;top:160.96px;width:101px;height:20px;line-height:20px;font-size:13.4px;color:#2e3553;text-align:right;letter-spacing:-0.3px">$262.00</div>
<div class="c" style="left:499px;top:160.96px;width:101px;height:20px;line-height:20px;font-size:13.4px;color:#2e3553;text-align:right;letter-spacing:-0.3px">$0.00</div>
<div class="c" style="left:603px;top:160.96px;width:101px;height:20px;line-height:20px;font-size:13.4px;color:#2e3553;text-align:right;letter-spacing:-0.3px">$134.00</div>
<div class="c" style="left:707px;top:160.96px;width:101px;height:20px;line-height:20px;font-size:13.4px;color:#2e3553;text-align:right;letter-spacing:-0.3px">$345.00</div>
<div class="c" style="left:811px;top:160.96px;width:101px;height:20px;line-height:20px;font-size:13.4px;color:#2e3553;text-align:right;letter-spacing:-0.3px">$215.00</div>
<div class="c" style="left:915px;top:160.96px;width:101px;height:20px;line-height:20px;font-size:13.4px;color:#2e3553;text-align:right;letter-spacing:-0.3px">$565.00</div>
<div class="c" style="left:1019px;top:160.96px;width:101px;height:20px;line-height:20px;font-size:13.4px;color:#2e3553;text-align:right;letter-spacing:-0.3px">$909.00</div>
<div class="c" style="left:28px;top:179.88px;width:156px;height:20px;line-height:20px;font-size:13.33px;color:#2e3553">收入点 4</div>
<div class="c" style="left:187px;top:179.96px;width:101px;height:20px;line-height:20px;font-size:13.4px;color:#2e3553;text-align:right;letter-spacing:-0.3px">$452.00</div>
<div class="c" style="left:291px;top:179.96px;width:101px;height:20px;line-height:20px;font-size:13.4px;color:#2e3553;text-align:right;letter-spacing:-0.3px">$12.00</div>
<div class="c" style="left:395px;top:179.96px;width:101px;height:20px;line-height:20px;font-size:13.4px;color:#2e3553;text-align:right;letter-spacing:-0.3px">$144.00</div>
<div class="c" style="left:499px;top:179.96px;width:101px;height:20px;line-height:20px;font-size:13.4px;color:#2e3553;text-align:right;letter-spacing:-0.3px">$50.00</div>
<div class="c" style="left:603px;top:179.96px;width:101px;height:20px;line-height:20px;font-size:13.4px;color:#2e3553;text-align:right;letter-spacing:-0.3px">$132.00</div>
<div class="c" style="left:707px;top:179.96px;width:101px;height:20px;line-height:20px;font-size:13.4px;color:#2e3553;text-align:right;letter-spacing:-0.3px">$36.00</div>
<div class="c" style="left:811px;top:179.96px;width:101px;height:20px;line-height:20px;font-size:13.4px;color:#2e3553;text-align:right;letter-spacing:-0.3px">$76.00</div>
<div class="c" style="left:915px;top:179.96px;width:101px;height:20px;line-height:20px;font-size:13.4px;color:#2e3553;text-align:right;letter-spacing:-0.3px">$54.00</div>
<div class="c" style="left:1019px;top:179.96px;width:101px;height:20px;line-height:20px;font-size:13.4px;color:#2e3553;text-align:right;letter-spacing:-0.3px">$309.00</div>
<div class="c" style="left:28px;top:198.88px;width:156px;height:20px;line-height:20px;font-size:13.33px;color:#2e3553">收入点 5</div>
<div class="c" style="left:187px;top:198.96px;width:101px;height:20px;line-height:20px;font-size:13.4px;color:#2e3553;text-align:right;letter-spacing:-0.3px">$120.00</div>
<div class="c" style="left:291px;top:198.96px;width:101px;height:20px;line-height:20px;font-size:13.4px;color:#2e3553;text-align:right;letter-spacing:-0.3px">$646.00</div>
<div class="c" style="left:395px;top:198.96px;width:101px;height:20px;line-height:20px;font-size:13.4px;color:#2e3553;text-align:right;letter-spacing:-0.3px">$300.00</div>
<div class="c" style="left:499px;top:198.96px;width:101px;height:20px;line-height:20px;font-size:13.4px;color:#2e3553;text-align:right;letter-spacing:-0.3px">$233.00</div>
<div class="c" style="left:603px;top:198.96px;width:101px;height:20px;line-height:20px;font-size:13.4px;color:#2e3553;text-align:right;letter-spacing:-0.3px">$87.00</div>
<div class="c" style="left:707px;top:198.96px;width:101px;height:20px;line-height:20px;font-size:13.4px;color:#2e3553;text-align:right;letter-spacing:-0.3px">$563.00</div>
<div class="c" style="left:811px;top:198.96px;width:101px;height:20px;line-height:20px;font-size:13.4px;color:#2e3553;text-align:right;letter-spacing:-0.3px">$677.00</div>
<div class="c" style="left:915px;top:198.96px;width:101px;height:20px;line-height:20px;font-size:13.4px;color:#2e3553;text-align:right;letter-spacing:-0.3px">$97.00</div>
<div class="c" style="left:1019px;top:198.96px;width:101px;height:20px;line-height:20px;font-size:13.4px;color:#2e3553;text-align:right;letter-spacing:-0.3px">$234.00</div>
<div class="c" style="left:28px;top:217.88px;width:156px;height:20px;line-height:20px;font-size:13.33px;color:#2e3553">收入点 6</div>
<div class="c" style="left:187px;top:217.96px;width:101px;height:20px;line-height:20px;font-size:13.4px;color:#2e3553;text-align:right;letter-spacing:-0.3px">$90.00</div>
<div class="c" style="left:291px;top:217.96px;width:101px;height:20px;line-height:20px;font-size:13.4px;color:#2e3553;text-align:right;letter-spacing:-0.3px">$3,567.00</div>
<div class="c" style="left:395px;top:217.96px;width:101px;height:20px;line-height:20px;font-size:13.4px;color:#2e3553;text-align:right;letter-spacing:-0.3px">$1,000.00</div>
<div class="c" style="left:499px;top:217.96px;width:101px;height:20px;line-height:20px;font-size:13.4px;color:#2e3553;text-align:right;letter-spacing:-0.3px">$2,000.00</div>
<div class="c" style="left:603px;top:217.96px;width:101px;height:20px;line-height:20px;font-size:13.4px;color:#2e3553;text-align:right;letter-spacing:-0.3px">$565.00</div>
<div class="c" style="left:707px;top:217.96px;width:101px;height:20px;line-height:20px;font-size:13.4px;color:#2e3553;text-align:right;letter-spacing:-0.3px">$783.00</div>
<div class="c" style="left:811px;top:217.96px;width:101px;height:20px;line-height:20px;font-size:13.4px;color:#2e3553;text-align:right;letter-spacing:-0.3px">$665.00</div>
<div class="c" style="left:915px;top:217.96px;width:101px;height:20px;line-height:20px;font-size:13.4px;color:#2e3553;text-align:right;letter-spacing:-0.3px">$66.00</div>
<div class="c" style="left:1019px;top:217.96px;width:101px;height:20px;line-height:20px;font-size:13.4px;color:#2e3553;text-align:right;letter-spacing:-0.3px">$1,000.00</div>
<div class="c" style="left:28px;top:236.88px;width:156px;height:20px;line-height:20px;font-size:13.33px;color:#2e3553">收入点 7</div>
<div class="c" style="left:187px;top:236.96px;width:101px;height:20px;line-height:20px;font-size:13.4px;color:#2e3553;text-align:right;letter-spacing:-0.3px">$0.00</div>
<div class="c" style="left:291px;top:236.96px;width:101px;height:20px;line-height:20px;font-size:13.4px;color:#2e3553;text-align:right;letter-spacing:-0.3px">$4,757.00</div>
<div class="c" style="left:395px;top:236.96px;width:101px;height:20px;line-height:20px;font-size:13.4px;color:#2e3553;text-align:right;letter-spacing:-0.3px">$345.00</div>
<div class="c" style="left:499px;top:236.96px;width:101px;height:20px;line-height:20px;font-size:13.4px;color:#2e3553;text-align:right;letter-spacing:-0.3px">$323.00</div>
<div class="c" style="left:603px;top:236.96px;width:101px;height:20px;line-height:20px;font-size:13.4px;color:#2e3553;text-align:right;letter-spacing:-0.3px">$456.00</div>
<div class="c" style="left:707px;top:236.96px;width:101px;height:20px;line-height:20px;font-size:13.4px;color:#2e3553;text-align:right;letter-spacing:-0.3px">$75.00</div>
<div class="c" style="left:811px;top:236.96px;width:101px;height:20px;line-height:20px;font-size:13.4px;color:#2e3553;text-align:right;letter-spacing:-0.3px">$722.00</div>
<div class="c" style="left:915px;top:236.96px;width:101px;height:20px;line-height:20px;font-size:13.4px;color:#2e3553;text-align:right;letter-spacing:-0.3px">$522.00</div>
<div class="c" style="left:1019px;top:236.96px;width:101px;height:20px;line-height:20px;font-size:13.4px;color:#2e3553;text-align:right;letter-spacing:-0.3px">$0.00</div>
<div class="c" style="left:28px;top:255.88px;width:156px;height:20px;line-height:20px;font-size:13.33px;color:#2e3553">收入点 8</div>
<div class="c" style="left:187px;top:255.96px;width:101px;height:20px;line-height:20px;font-size:13.4px;color:#2e3553;text-align:right;letter-spacing:-0.3px">$0.00</div>
<div class="c" style="left:291px;top:255.96px;width:101px;height:20px;line-height:20px;font-size:13.4px;color:#2e3553;text-align:right;letter-spacing:-0.3px">$34.00</div>
<div class="c" style="left:395px;top:255.96px;width:101px;height:20px;line-height:20px;font-size:13.4px;color:#2e3553;text-align:right;letter-spacing:-0.3px">$501.00</div>
<div class="c" style="left:499px;top:255.96px;width:101px;height:20px;line-height:20px;font-size:13.4px;color:#2e3553;text-align:right;letter-spacing:-0.3px">$122.00</div>
<div class="c" style="left:603px;top:255.96px;width:101px;height:20px;line-height:20px;font-size:13.4px;color:#2e3553;text-align:right;letter-spacing:-0.3px">$457.00</div>
<div class="c" style="left:707px;top:255.96px;width:101px;height:20px;line-height:20px;font-size:13.4px;color:#2e3553;text-align:right;letter-spacing:-0.3px">$344.00</div>
<div class="c" style="left:811px;top:255.96px;width:101px;height:20px;line-height:20px;font-size:13.4px;color:#2e3553;text-align:right;letter-spacing:-0.3px">$704.00</div>
<div class="c" style="left:915px;top:255.96px;width:101px;height:20px;line-height:20px;font-size:13.4px;color:#2e3553;text-align:right;letter-spacing:-0.3px">$245.00</div>
<div class="c" style="left:1019px;top:255.96px;width:101px;height:20px;line-height:20px;font-size:13.4px;color:#2e3553;text-align:right;letter-spacing:-0.3px">$0.00</div>
<div class="c" style="left:28px;top:274.88px;width:156px;height:20px;line-height:20px;font-size:13.33px;color:#2e3553">收入点 9</div>
<div class="c" style="left:187px;top:274.96px;width:101px;height:20px;line-height:20px;font-size:13.4px;color:#2e3553;text-align:right;letter-spacing:-0.3px">$345.00</div>
<div class="c" style="left:291px;top:274.96px;width:101px;height:20px;line-height:20px;font-size:13.4px;color:#2e3553;text-align:right;letter-spacing:-0.3px">$235.00</div>
<div class="c" style="left:395px;top:274.96px;width:101px;height:20px;line-height:20px;font-size:13.4px;color:#2e3553;text-align:right;letter-spacing:-0.3px">$0.00</div>
<div class="c" style="left:499px;top:274.96px;width:101px;height:20px;line-height:20px;font-size:13.4px;color:#2e3553;text-align:right;letter-spacing:-0.3px">$100.00</div>
<div class="c" style="left:603px;top:274.96px;width:101px;height:20px;line-height:20px;font-size:13.4px;color:#2e3553;text-align:right;letter-spacing:-0.3px">$340.00</div>
<div class="c" style="left:707px;top:274.96px;width:101px;height:20px;line-height:20px;font-size:13.4px;color:#2e3553;text-align:right;letter-spacing:-0.3px">$34.00</div>
<div class="c" style="left:811px;top:274.96px;width:101px;height:20px;line-height:20px;font-size:13.4px;color:#2e3553;text-align:right;letter-spacing:-0.3px">$45.00</div>
<div class="c" style="left:915px;top:274.96px;width:101px;height:20px;line-height:20px;font-size:13.4px;color:#2e3553;text-align:right;letter-spacing:-0.3px">$345.00</div>
<div class="c" style="left:1019px;top:274.96px;width:101px;height:20px;line-height:20px;font-size:13.4px;color:#2e3553;text-align:right;letter-spacing:-0.3px">$454.00</div>
<div class="c" style="left:28px;top:292.98px;width:156px;height:20px;line-height:20px;font-size:14.5px;color:#2e3553;font-weight:bold">总计</div>
<div class="c" style="left:187px;top:292.92px;width:101px;height:20px;line-height:20px;font-size:14.67px;color:#2e3553;text-align:right;font-weight:bold;letter-spacing:-0.15px">$7,398.00</div>
<div class="c" style="left:291px;top:292.92px;width:101px;height:20px;line-height:20px;font-size:14.67px;color:#2e3553;text-align:right;font-weight:bold;letter-spacing:-0.15px">$11,061.00</div>
<div class="c" style="left:395px;top:292.92px;width:101px;height:20px;line-height:20px;font-size:14.67px;color:#2e3553;text-align:right;font-weight:bold;letter-spacing:-0.15px">$3,786.00</div>
<div class="c" style="left:499px;top:292.92px;width:101px;height:20px;line-height:20px;font-size:14.67px;color:#2e3553;text-align:right;font-weight:bold;letter-spacing:-0.15px">$4,028.00</div>
<div class="c" style="left:603px;top:292.92px;width:101px;height:20px;line-height:20px;font-size:14.67px;color:#2e3553;text-align:right;font-weight:bold;letter-spacing:-0.15px">$3,412.00</div>
<div class="c" style="left:707px;top:292.92px;width:101px;height:20px;line-height:20px;font-size:14.67px;color:#2e3553;text-align:right;font-weight:bold;letter-spacing:-0.15px">$3,180.00</div>
<div class="c" style="left:811px;top:292.92px;width:101px;height:20px;line-height:20px;font-size:14.67px;color:#2e3553;text-align:right;font-weight:bold;letter-spacing:-0.15px">$4,338.00</div>
<div class="c" style="left:915px;top:292.92px;width:101px;height:20px;line-height:20px;font-size:14.67px;color:#2e3553;text-align:right;font-weight:bold;letter-spacing:-0.15px">$3,859.00</div>
<div class="c" style="left:1019px;top:292.92px;width:101px;height:20px;line-height:20px;font-size:14.67px;color:#2e3553;text-align:right;font-weight:bold;letter-spacing:-0.15px">$4,461.00</div>
<div style="position:absolute;left:26px;top:360px;width:1120px;height:24px;background:#3a8fa6"></div>
<div class="c" style="left:29px;top:362.55px;width:150px;height:20px;line-height:20px;font-size:14.3px;font-weight:bold;color:#fff">支出</div>
<div class="c" style="left:187px;top:364.46px;width:103px;height:20px;line-height:20px;font-size:16px;text-align:center;font-weight:bold;color:#fff"><span style="font-size:15.5px">1</span><span style="display:inline-block;width:6.5px"></span><span style="font-size:14px">月</span></div>
<div class="c" style="left:291px;top:364.46px;width:103px;height:20px;line-height:20px;font-size:16px;text-align:center;font-weight:bold;color:#fff"><span style="font-size:15.5px">2</span><span style="display:inline-block;width:6.5px"></span><span style="font-size:14px">月</span></div>
<div class="c" style="left:395px;top:364.46px;width:103px;height:20px;line-height:20px;font-size:16px;text-align:center;font-weight:bold;color:#fff"><span style="font-size:15.5px">3</span><span style="display:inline-block;width:6.5px"></span><span style="font-size:14px">月</span></div>
<div class="c" style="left:499px;top:364.46px;width:103px;height:20px;line-height:20px;font-size:16px;text-align:center;font-weight:bold;color:#fff"><span style="font-size:15.5px">4</span><span style="display:inline-block;width:6.5px"></span><span style="font-size:14px">月</span></div>
<div class="c" style="left:603px;top:364.46px;width:103px;height:20px;line-height:20px;font-size:16px;text-align:center;font-weight:bold;color:#fff"><span style="font-size:15.5px">5</span><span style="display:inline-block;width:6.5px"></span><span style="font-size:14px">月</span></div>
<div class="c" style="left:707px;top:364.46px;width:103px;height:20px;line-height:20px;font-size:16px;text-align:center;font-weight:bold;color:#fff"><span style="font-size:15.5px">6</span><span style="display:inline-block;width:6.5px"></span><span style="font-size:14px">月</span></div>
<div class="c" style="left:811px;top:364.46px;width:103px;height:20px;line-height:20px;font-size:16px;text-align:center;font-weight:bold;color:#fff"><span style="font-size:15.5px">7</span><span style="display:inline-block;width:6.5px"></span><span style="font-size:14px">月</span></div>
<div class="c" style="left:915px;top:364.46px;width:103px;height:20px;line-height:20px;font-size:16px;text-align:center;font-weight:bold;color:#fff"><span style="font-size:15.5px">8</span><span style="display:inline-block;width:6.5px"></span><span style="font-size:14px">月</span></div>
<div class="c" style="left:1019px;top:364.46px;width:103px;height:20px;line-height:20px;font-size:16px;text-align:center;font-weight:bold;color:#fff"><span style="font-size:15.5px">9</span><span style="display:inline-block;width:6.5px"></span><span style="font-size:14px">月</span></div>
<div style="position:absolute;left:187px;top:385px;width:103px;height:120px;background:#d4eaef"></div>
<div style="position:absolute;left:395px;top:385px;width:103px;height:120px;background:#d4eaef"></div>
<div style="position:absolute;left:603px;top:385px;width:103px;height:120px;background:#d4eaef"></div>
<div style="position:absolute;left:811px;top:385px;width:103px;height:120px;background:#d4eaef"></div>
<div style="position:absolute;left:1019px;top:385px;width:103px;height:120px;background:#d4eaef"></div>
<div style="position:absolute;left:26px;top:384px;width:1120px;height:1px;background:#a8d3e0"></div>
<div style="position:absolute;left:26px;top:403px;width:1120px;height:1px;background:#a8d3e0"></div>
<div style="position:absolute;left:26px;top:422px;width:1120px;height:1px;background:#a8d3e0"></div>
<div style="position:absolute;left:26px;top:441px;width:1120px;height:1px;background:#a8d3e0"></div>
<div style="position:absolute;left:26px;top:460px;width:1120px;height:1px;background:#a8d3e0"></div>
<div style="position:absolute;left:26px;top:479px;width:1120px;height:1px;background:#a8d3e0"></div>
<div style="position:absolute;left:26px;top:498px;width:1120px;height:1px;background:#a8d3e0"></div>
<div style="position:absolute;left:186px;top:384px;width:1px;height:120px;background:#a8d3e0"></div>
<div style="position:absolute;left:290px;top:384px;width:1px;height:120px;background:#a8d3e0"></div>
<div style="position:absolute;left:394px;top:384px;width:1px;height:120px;background:#a8d3e0"></div>
<div style="position:absolute;left:498px;top:384px;width:1px;height:120px;background:#a8d3e0"></div>
<div style="position:absolute;left:602px;top:384px;width:1px;height:120px;background:#a8d3e0"></div>
<div style="position:absolute;left:706px;top:384px;width:1px;height:120px;background:#a8d3e0"></div>
<div style="position:absolute;left:810px;top:384px;width:1px;height:120px;background:#a8d3e0"></div>
<div style="position:absolute;left:914px;top:384px;width:1px;height:120px;background:#a8d3e0"></div>
<div style="position:absolute;left:1018px;top:384px;width:1px;height:120px;background:#a8d3e0"></div>
<div style="position:absolute;left:1122px;top:384px;width:1px;height:120px;background:#a8d3e0"></div>
<div class="c" style="left:28px;top:384.88px;width:156px;height:20px;line-height:20px;font-size:13.33px;color:#2c4650">支出点 1</div>
<div class="c" style="left:187px;top:384.96px;width:101px;height:20px;line-height:20px;font-size:13.4px;color:#2c4650;text-align:right;letter-spacing:-0.3px">$43.00</div>
<div class="c" style="left:291px;top:384.96px;width:101px;height:20px;line-height:20px;font-size:13.4px;color:#2c4650;text-align:right;letter-spacing:-0.3px">$543.00</div>
<div class="c" style="left:395px;top:384.96px;width:101px;height:20px;line-height:20px;font-size:13.4px;color:#2c4650;text-align:right;letter-spacing:-0.3px">$98.00</div>
<div class="c" style="left:499px;top:384.96px;width:101px;height:20px;line-height:20px;font-size:13.4px;color:#2c4650;text-align:right;letter-spacing:-0.3px">$90.00</div>
<div class="c" style="left:603px;top:384.96px;width:101px;height:20px;line-height:20px;font-size:13.4px;color:#2c4650;text-align:right;letter-spacing:-0.3px">$54.00</div>
<div class="c" style="left:707px;top:384.96px;width:101px;height:20px;line-height:20px;font-size:13.4px;color:#2c4650;text-align:right;letter-spacing:-0.3px">$43.00</div>
<div class="c" style="left:811px;top:384.96px;width:101px;height:20px;line-height:20px;font-size:13.4px;color:#2c4650;text-align:right;letter-spacing:-0.3px">$434.00</div>
<div class="c" style="left:915px;top:384.96px;width:101px;height:20px;line-height:20px;font-size:13.4px;color:#2c4650;text-align:right;letter-spacing:-0.3px">$23.00</div>
<div class="c" style="left:1019px;top:384.96px;width:101px;height:20px;line-height:20px;font-size:13.4px;color:#2c4650;text-align:right;letter-spacing:-0.3px">$89.00</div>
<div class="c" style="left:28px;top:403.88px;width:156px;height:20px;line-height:20px;font-size:13.33px;color:#2c4650">支出点子项 1</div>
<div class="c" style="left:187px;top:403.96px;width:101px;height:20px;line-height:20px;font-size:13.4px;color:#2c4650;text-align:right;letter-spacing:-0.3px">$345.00</div>
<div class="c" style="left:291px;top:403.96px;width:101px;height:20px;line-height:20px;font-size:13.4px;color:#2c4650;text-align:right;letter-spacing:-0.3px">$45.00</div>
<div class="c" style="left:395px;top:403.96px;width:101px;height:20px;line-height:20px;font-size:13.4px;color:#2c4650;text-align:right;letter-spacing:-0.3px">$45.00</div>
<div class="c" style="left:499px;top:403.96px;width:101px;height:20px;line-height:20px;font-size:13.4px;color:#2c4650;text-align:right;letter-spacing:-0.3px">$45.00</div>
<div class="c" style="left:603px;top:403.96px;width:101px;height:20px;line-height:20px;font-size:13.4px;color:#2c4650;text-align:right;letter-spacing:-0.3px">$98.00</div>
<div class="c" style="left:707px;top:403.96px;width:101px;height:20px;line-height:20px;font-size:13.4px;color:#2c4650;text-align:right;letter-spacing:-0.3px">$341.00</div>
<div class="c" style="left:811px;top:403.96px;width:101px;height:20px;line-height:20px;font-size:13.4px;color:#2c4650;text-align:right;letter-spacing:-0.3px">$23.00</div>
<div class="c" style="left:915px;top:403.96px;width:101px;height:20px;line-height:20px;font-size:13.4px;color:#2c4650;text-align:right;letter-spacing:-0.3px">$233.00</div>
<div class="c" style="left:1019px;top:403.96px;width:101px;height:20px;line-height:20px;font-size:13.4px;color:#2c4650;text-align:right;letter-spacing:-0.3px">$342.00</div>
<div class="c" style="left:28px;top:422.88px;width:156px;height:20px;line-height:20px;font-size:13.33px;color:#2c4650">支出点子项 2</div>
<div class="c" style="left:187px;top:422.96px;width:101px;height:20px;line-height:20px;font-size:13.4px;color:#2c4650;text-align:right;letter-spacing:-0.3px">$342.00</div>
<div class="c" style="left:291px;top:422.96px;width:101px;height:20px;line-height:20px;font-size:13.4px;color:#2c4650;text-align:right;letter-spacing:-0.3px">$345.00</div>
<div class="c" style="left:395px;top:422.96px;width:101px;height:20px;line-height:20px;font-size:13.4px;color:#2c4650;text-align:right;letter-spacing:-0.3px">$354.00</div>
<div class="c" style="left:499px;top:422.96px;width:101px;height:20px;line-height:20px;font-size:13.4px;color:#2c4650;text-align:right;letter-spacing:-0.3px">$356.00</div>
<div class="c" style="left:603px;top:422.96px;width:101px;height:20px;line-height:20px;font-size:13.4px;color:#2c4650;text-align:right;letter-spacing:-0.3px">$398.00</div>
<div class="c" style="left:707px;top:422.96px;width:101px;height:20px;line-height:20px;font-size:13.4px;color:#2c4650;text-align:right;letter-spacing:-0.3px">$341.00</div>
<div class="c" style="left:811px;top:422.96px;width:101px;height:20px;line-height:20px;font-size:13.4px;color:#2c4650;text-align:right;letter-spacing:-0.3px">$241.00</div>
<div class="c" style="left:915px;top:422.96px;width:101px;height:20px;line-height:20px;font-size:13.4px;color:#2c4650;text-align:right;letter-spacing:-0.3px">$65.00</div>
<div class="c" style="left:1019px;top:422.96px;width:101px;height:20px;line-height:20px;font-size:13.4px;color:#2c4650;text-align:right;letter-spacing:-0.3px">$24.00</div>
<div class="c" style="left:28px;top:441.88px;width:156px;height:20px;line-height:20px;font-size:13.33px;color:#2c4650">支出点子项 3</div>
<div class="c" style="left:187px;top:441.96px;width:101px;height:20px;line-height:20px;font-size:13.4px;color:#2c4650;text-align:right;letter-spacing:-0.3px">$12.00</div>
<div class="c" style="left:291px;top:441.96px;width:101px;height:20px;line-height:20px;font-size:13.4px;color:#2c4650;text-align:right;letter-spacing:-0.3px">$234.00</div>
<div class="c" style="left:395px;top:441.96px;width:101px;height:20px;line-height:20px;font-size:13.4px;color:#2c4650;text-align:right;letter-spacing:-0.3px">$345.00</div>
<div class="c" style="left:499px;top:441.96px;width:101px;height:20px;line-height:20px;font-size:13.4px;color:#2c4650;text-align:right;letter-spacing:-0.3px">$90.00</div>
<div class="c" style="left:603px;top:441.96px;width:101px;height:20px;line-height:20px;font-size:13.4px;color:#2c4650;text-align:right;letter-spacing:-0.3px">$93.00</div>
<div class="c" style="left:707px;top:441.96px;width:101px;height:20px;line-height:20px;font-size:13.4px;color:#2c4650;text-align:right;letter-spacing:-0.3px">$34.00</div>
<div class="c" style="left:811px;top:441.96px;width:101px;height:20px;line-height:20px;font-size:13.4px;color:#2c4650;text-align:right;letter-spacing:-0.3px">$34.00</div>
<div class="c" style="left:915px;top:441.96px;width:101px;height:20px;line-height:20px;font-size:13.4px;color:#2c4650;text-align:right;letter-spacing:-0.3px">$65.00</div>
<div class="c" style="left:1019px;top:441.96px;width:101px;height:20px;line-height:20px;font-size:13.4px;color:#2c4650;text-align:right;letter-spacing:-0.3px">$23.00</div>
<div class="c" style="left:28px;top:460.88px;width:156px;height:20px;line-height:20px;font-size:13.33px;color:#2c4650">支出点子项 4</div>
<div class="c" style="left:187px;top:460.96px;width:101px;height:20px;line-height:20px;font-size:13.4px;color:#2c4650;text-align:right;letter-spacing:-0.3px">$97.00</div>
<div class="c" style="left:291px;top:460.96px;width:101px;height:20px;line-height:20px;font-size:13.4px;color:#2c4650;text-align:right;letter-spacing:-0.3px">$23.00</div>
<div class="c" style="left:395px;top:460.96px;width:101px;height:20px;line-height:20px;font-size:13.4px;color:#2c4650;text-align:right;letter-spacing:-0.3px">$34.00</div>
<div class="c" style="left:499px;top:460.96px;width:101px;height:20px;line-height:20px;font-size:13.4px;color:#2c4650;text-align:right;letter-spacing:-0.3px">$45.00</div>
<div class="c" style="left:603px;top:460.96px;width:101px;height:20px;line-height:20px;font-size:13.4px;color:#2c4650;text-align:right;letter-spacing:-0.3px">$45.00</div>
<div class="c" style="left:707px;top:460.96px;width:101px;height:20px;line-height:20px;font-size:13.4px;color:#2c4650;text-align:right;letter-spacing:-0.3px">$34.00</div>
<div class="c" style="left:811px;top:460.96px;width:101px;height:20px;line-height:20px;font-size:13.4px;color:#2c4650;text-align:right;letter-spacing:-0.3px">$64.00</div>
<div class="c" style="left:915px;top:460.96px;width:101px;height:20px;line-height:20px;font-size:13.4px;color:#2c4650;text-align:right;letter-spacing:-0.3px">$64.00</div>
<div class="c" style="left:1019px;top:460.96px;width:101px;height:20px;line-height:20px;font-size:13.4px;color:#2c4650;text-align:right;letter-spacing:-0.3px">$90.00</div>
<div class="c" style="left:28px;top:479.88px;width:156px;height:20px;line-height:20px;font-size:13.33px;color:#2c4650">支出点子项 5</div>
<div class="c" style="left:187px;top:479.96px;width:101px;height:20px;line-height:20px;font-size:13.4px;color:#2c4650;text-align:right;letter-spacing:-0.3px">$34.00</div>
<div class="c" style="left:291px;top:479.96px;width:101px;height:20px;line-height:20px;font-size:13.4px;color:#2c4650;text-align:right;letter-spacing:-0.3px">$23.00</div>
<div class="c" style="left:395px;top:479.96px;width:101px;height:20px;line-height:20px;font-size:13.4px;color:#2c4650;text-align:right;letter-spacing:-0.3px">$34.00</div>
<div class="c" style="left:499px;top:479.96px;width:101px;height:20px;line-height:20px;font-size:13.4px;color:#2c4650;text-align:right;letter-spacing:-0.3px">$45.00</div>
<div class="c" style="left:603px;top:479.96px;width:101px;height:20px;line-height:20px;font-size:13.4px;color:#2c4650;text-align:right;letter-spacing:-0.3px">$23.00</div>
<div class="c" style="left:707px;top:479.96px;width:101px;height:20px;line-height:20px;font-size:13.4px;color:#2c4650;text-align:right;letter-spacing:-0.3px">$12.00</div>
<div class="c" style="left:811px;top:479.96px;width:101px;height:20px;line-height:20px;font-size:13.4px;color:#2c4650;text-align:right;letter-spacing:-0.3px">$65.00</div>
<div class="c" style="left:915px;top:479.96px;width:101px;height:20px;line-height:20px;font-size:13.4px;color:#2c4650;text-align:right;letter-spacing:-0.3px">$65.00</div>
<div class="c" style="left:1019px;top:479.96px;width:101px;height:20px;line-height:20px;font-size:13.4px;color:#2c4650;text-align:right;letter-spacing:-0.3px">$54.00</div>
<div style="position:absolute;left:24px;top:311px;width:164px;height:51px;border:2px solid #3f7f55;box-sizing:border-box"></div>
<div class="c" style="left:26px;top:340.92px;width:158.5px;height:20px;line-height:20px;font-size:14.67px;text-align:right;color:#2e3553">87</div>
<div style="position:absolute;left:183px;top:357px;width:7px;height:7px;background:#3f7f55;border:1px solid #fff;box-sizing:content-box;width:5px;height:5px"></div>
</div>
<div style="position:absolute;left:1186px;top:171px;width:14px;height:492px;background:#f3f3f3"></div>
<div style="position:absolute;left:1186px;top:177px;width:13px;height:13px;background:#f4f4f4;border:1px solid #d4d4d4;box-sizing:border-box"></div>
<svg style="position:absolute;left:1189px;top:181px;" width="7" height="4" viewBox="0 0 7 4" fill="none" stroke="#444444" stroke-width="1"><path d="M0 4 L3.5 0 L7 4 Z" fill="#aaa" stroke="none"/></svg>
<div style="position:absolute;left:1186px;top:191px;width:13px;height:76px;background:#f4f4f4;border:1px solid #d4d4d4;box-sizing:border-box"></div>
<div style="position:absolute;left:1190px;top:224px;width:5px;height:1px;background:#bbb"></div>
<div style="position:absolute;left:1190px;top:226px;width:5px;height:1px;background:#bbb"></div>
<div style="position:absolute;left:1190px;top:228px;width:5px;height:1px;background:#bbb"></div>
<div style="position:absolute;left:1190px;top:230px;width:5px;height:1px;background:#bbb"></div>
<div style="position:absolute;left:1190px;top:232px;width:5px;height:1px;background:#bbb"></div>
<div style="position:absolute;left:1190px;top:234px;width:5px;height:1px;background:#bbb"></div>
<div style="position:absolute;left:1186px;top:649px;width:13px;height:13px;background:#f4f4f4;border:1px solid #d4d4d4;box-sizing:border-box"></div>
<svg style="position:absolute;left:1189px;top:654px;" width="7" height="4" viewBox="0 0 7 4" fill="none" stroke="#444444" stroke-width="1"><path d="M0 0 L3.5 4 L7 0 Z" fill="#aaa" stroke="none"/></svg>
<div style="position:absolute;left:40px;top:663px;width:1146px;height:14px;background:#f3f3f3"></div>
<div style="position:absolute;left:41px;top:663px;width:13px;height:13px;background:#f4f4f4;border:1px solid #d4d4d4;box-sizing:border-box"></div>
<svg style="position:absolute;left:45px;top:666px;" width="4" height="7" viewBox="0 0 4 7" fill="none" stroke="#444444" stroke-width="1"><path d="M4 0 L0 3.5 L4 7 Z" fill="#aaa" stroke="none"/></svg>
<div style="position:absolute;left:55px;top:663px;width:542px;height:13px;background:#f4f4f4;border:1px solid #d4d4d4;box-sizing:border-box"></div>
<div style="position:absolute;left:321px;top:667px;width:1px;height:5px;background:#bbb"></div>
<div style="position:absolute;left:323px;top:667px;width:1px;height:5px;background:#bbb"></div>
<div style="position:absolute;left:325px;top:667px;width:1px;height:5px;background:#bbb"></div>
<div style="position:absolute;left:327px;top:667px;width:1px;height:5px;background:#bbb"></div>
<div style="position:absolute;left:329px;top:667px;width:1px;height:5px;background:#bbb"></div>
<div style="position:absolute;left:331px;top:667px;width:1px;height:5px;background:#bbb"></div>
<div style="position:absolute;left:1172px;top:663px;width:13px;height:13px;background:#f4f4f4;border:1px solid #d4d4d4;box-sizing:border-box"></div>
<svg style="position:absolute;left:1176px;top:666px;" width="4" height="7" viewBox="0 0 4 7" fill="none" stroke="#444444" stroke-width="1"><path d="M0 0 L4 3.5 L0 7 Z" fill="#aaa" stroke="none"/></svg>
<div style="position:absolute;left:0px;top:677px;width:1240px;height:31px;background:#fff"></div>
<div style="position:absolute;left:0px;top:677px;width:1240px;height:1px;background:#d6d6d6"></div>
<svg style="position:absolute;left:19px;top:687px;" width="7" height="12" viewBox="0 0 7 12" fill="none" stroke="#444444" stroke-width="1"><path d="M6 0.5 L0.8 6 L6 11.5" stroke="#bbb"/></svg>
<svg style="position:absolute;left:45px;top:687px;" width="7" height="12" viewBox="0 0 7 12" fill="none" stroke="#444444" stroke-width="1"><path d="M1 0.5 L6.2 6 L1 11.5" stroke="#bbb"/></svg>
<div style="position:absolute;left:72px;top:677px;width:1px;height:31px;background:#d6d6d6"></div>
<svg style="position:absolute;left:86px;top:686px;" width="13" height="13" viewBox="0 0 13 13" fill="none" stroke="#444444" stroke-width="1"><path d="M6.5 0 V13 M0 6.5 H13" stroke="#333"/></svg>
<svg style="position:absolute;left:110px;top:686px;" width="14" height="13" viewBox="0 0 14 13" fill="none" stroke="#444444" stroke-width="1"><path d="M0 0.5 H14 M0 6.5 H14 M0 12.5 H14" stroke="#333"/></svg>
<div style="position:absolute;left:137px;top:677px;width:46px;height:31px;background:#fff;border-left:1px solid #d6d6d6;border-right:1px solid #d6d6d6;box-sizing:border-box"></div>
<div style="position:absolute;left:138px;top:677px;width:44px;height:3px;background:#3a8fa6"></div>
<div style="position:absolute;left:137px;top:686px;white-space:nowrap;width:46px;text-align:center;font-size:12.5px;font-weight:bold;color:#333;line-height:16px">预算</div>
<div style="position:absolute;left:606px;top:686px;white-space:nowrap;font-size:12px;color:#333;line-height:16px">所有更改已保存</div>
<div style="position:absolute;left:1107px;top:692px;width:13px;height:1px;background:#333"></div>
<div style="position:absolute;left:1139px;top:685px;white-space:nowrap;font-size:12px;color:#333;line-height:16px">缩放100%</div>
<svg style="position:absolute;left:1211px;top:686px;" width="13" height="13" viewBox="0 0 13 13" fill="none" stroke="#444444" stroke-width="1"><path d="M6.5 0 V13 M0 6.5 H13" stroke="#333"/></svg>
</body></html>
